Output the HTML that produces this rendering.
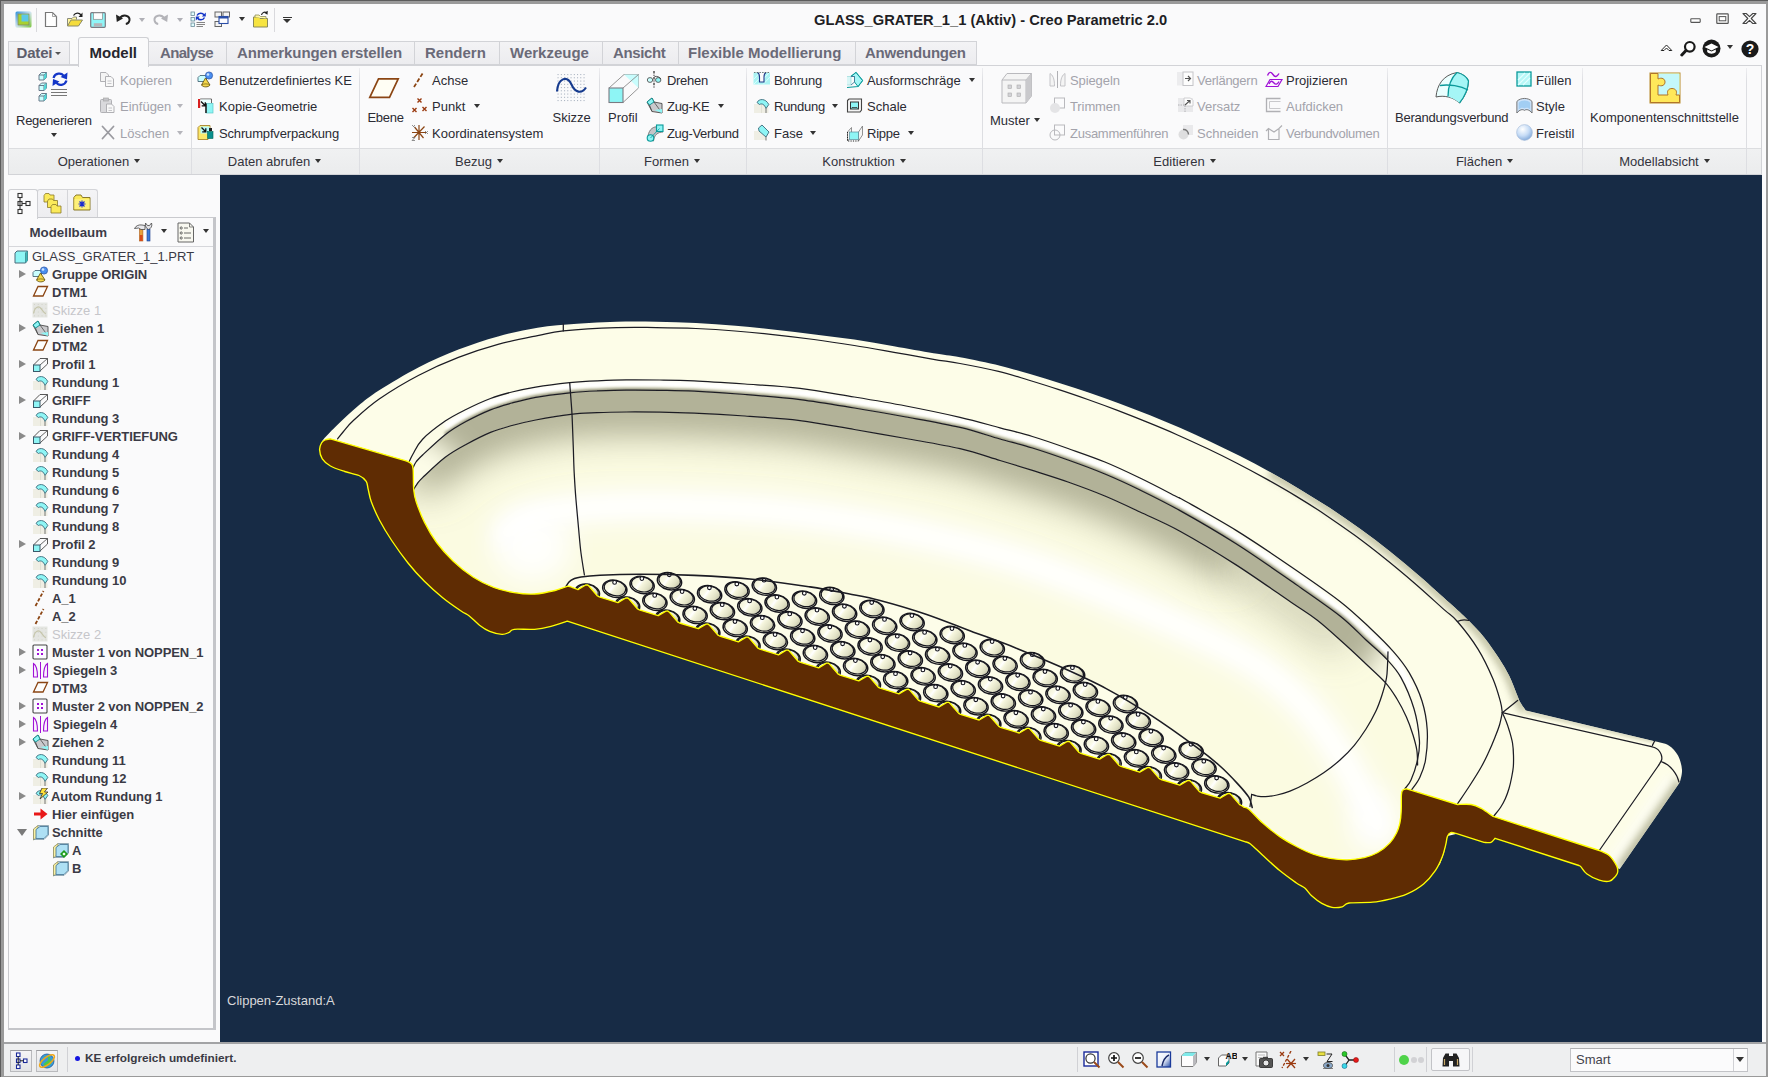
<!DOCTYPE html><html><head><meta charset="utf-8"><title>Creo Parametric 2.0</title><style>
html,body{margin:0;padding:0}
body{width:1768px;height:1077px;overflow:hidden;position:relative;background:#fafafb;font-family:"Liberation Sans", sans-serif;}
.t{position:absolute;white-space:nowrap;}
.ab{position:absolute}
</style></head><body>
<div style="position:absolute;left:0px;top:0px;width:1768px;height:1077px;box-sizing:border-box;border:4px solid #9a9a9a;border-right-width:2px;border-bottom-width:1.5px;"></div>
<div style="position:absolute;left:0px;top:0px;width:1768px;height:1077px;box-sizing:border-box;border-top:1px solid #5c5c5c;border-left:1px solid #5c5c5c;"></div>
<div class="t" style="left:814.0px;top:10.9px;font-size:14.7px;line-height:19px;color:#1e1e24;font-weight:bold;">GLASS_GRATER_1_1 (Aktiv) - Creo Parametric 2.0</div>
<div style="position:absolute;left:36px;top:8px;width:1px;height:24px;background:#d9d9dd"></div>
<div style="position:absolute;left:274px;top:8px;width:1px;height:24px;background:#d9d9dd"></div>
<svg class="ab" style="left:15.0px;top:11.0px" width="17" height="17"><defs><linearGradient id="ga" x1="0" y1="0" x2="1" y2="1"><stop offset="0" stop-color="#2c8fd8"/><stop offset=".5" stop-color="#cfe3ee"/><stop offset="1" stop-color="#7cc63c"/></linearGradient></defs><rect x=".5" y=".5" width="16" height="16" rx="1.5" fill="url(#ga)"/><rect x="3" y="3" width="11" height="11" fill="#a8d12f" stroke="#7a8a6a" stroke-width=".8"/><rect x="6.5" y="3.5" width="7" height="7" fill="#5cc8e8"/></svg>
<svg class="ab" style="left:44.0px;top:11.0px" width="14" height="17"><path d="M1.5 1.5H8.5L12.5 5.5V15.5H1.5Z" fill="#fff" stroke="#777" stroke-width="1.2"/><path d="M8.5 1.5V5.5H12.5" fill="none" stroke="#999" stroke-width=".9"/></svg>
<svg class="ab" style="left:66.0px;top:10.0px" width="18" height="18"><path d="M1.5 16V8.5H6L7.5 7H10.5V9.5" fill="#fff6a0" stroke="#8a8a7a" stroke-width="1"/><path d="M1.5 16L5 10H16.5L12.5 16Z" fill="#f5dc3c" stroke="#8a8a6a" stroke-width="1"/><path d="M7.5 5.5C9.5 2.5 13 2.2 15 5" fill="none" stroke="#222" stroke-width="1.3"/><path d="M16.5 2.5V7H12.5Z" fill="#222"/></svg>
<svg class="ab" style="left:90.0px;top:12.0px" width="16" height="16"><rect x=".7" y=".7" width="14.6" height="14.6" rx="1" fill="#8ff6f8" stroke="#7b7b83" stroke-width="1.2"/><rect x="3.6" y=".9" width="8.8" height="6.4" fill="#fdfdfd" stroke="#8a8a8a" stroke-width=".7"/><rect x="3.8" y="11.2" width="8.4" height="3.4" fill="#b5b5b9"/></svg>
<svg class="ab" style="left:115.0px;top:12.0px" width="17" height="13"><path d="M4.5 6.5C8 1.5 15 3.5 14.5 8.2C14.2 10.5 12.5 11.8 10.8 12" fill="none" stroke="#222" stroke-width="2"/><path d="M1 2.5L8 6.5L1.8 10Z" fill="#222"/></svg>
<svg class="ab" style="left:152.0px;top:12.0px" width="17" height="13"><path d="M12.5 6.5C9 1.5 2 3.5 2.5 8.2C2.8 10.5 4.5 11.8 6.2 12" fill="none" stroke="#b3b3b8" stroke-width="2"/><path d="M16 2.5L9 6.5L15.2 10Z" fill="#b3b3b8"/></svg>
<svg class="ab" style="left:190.0px;top:11.0px" width="17" height="17"><g fill="#dffcfc" stroke="#6a8a9a" stroke-width=".8"><rect x="1" y="1" width="3.5" height="3.5"/><rect x="1" y="6.5" width="3.5" height="3.5"/><rect x="1" y="12" width="3.5" height="3.5"/></g><path d="M7 4.5C8.5 1.5 12.5 1.5 14 4M14.5 6.5C13 9.5 9 9.5 7.5 7" fill="none" stroke="#1436c8" stroke-width="1.5"/><path d="M15.8 1.5V5.5H11.8ZM5.8 9.5V5.5H9.8Z" fill="#1436c8"/><path d="M6.5 11.5H15M6.5 13.5H15M6.5 15.5H13" stroke="#777" stroke-width=".9"/></svg>
<svg class="ab" style="left:214.0px;top:11.0px" width="17" height="17"><g fill="#f4f4f4" stroke="#666" stroke-width="1"><rect x="1" y="1" width="6.5" height="5"/><rect x="9" y="1" width="6.5" height="5"/><rect x="1" y="10.5" width="6.5" height="5"/></g><rect x="5" y="5.5" width="9" height="7" fill="#fdfdff" stroke="#2a4ea8" stroke-width="1.1"/><rect x="5" y="5.5" width="9" height="2" fill="#2a4ea8"/></svg>
<svg class="ab" style="left:252.0px;top:10.0px" width="18" height="18"><path d="M1.5 7H6.5L8 8.5H15.5V17H1.5Z" fill="#f7e441" stroke="#8a8a5a" stroke-width="1"/><path d="M3 7V5H7L8.5 6.5H14V8.5" fill="#fff7a5" stroke="#8a8a5a" stroke-width=".8"/><path d="M9.5 5C10 2.5 12.5 1.5 14.5 2.8" fill="none" stroke="#222" stroke-width="1.2"/><path d="M15.8 .8L15.5 4.8L12.2 2.8Z" fill="#222"/></svg>
<div style="position:absolute;left:139.0px;top:17.5px;width:0;height:0;border-left:3.5px solid transparent;border-right:3.5px solid transparent;border-top:4.0px solid #b0b0b6"></div>
<div style="position:absolute;left:176.5px;top:17.5px;width:0;height:0;border-left:3.5px solid transparent;border-right:3.5px solid transparent;border-top:4.0px solid #b0b0b6"></div>
<div style="position:absolute;left:239.0px;top:17.0px;width:0;height:0;border-left:3.5px solid transparent;border-right:3.5px solid transparent;border-top:4.0px solid #333"></div>
<div style="position:absolute;left:283.0px;top:19.3px;width:0;height:0;border-left:4.2px solid transparent;border-right:4.2px solid transparent;border-top:4.5px solid #333"></div>
<div style="position:absolute;left:283px;top:16.5px;width:8.5px;height:1.5px;background:#333"></div>
<svg class="ab" style="left:1690.0px;top:18.0px" width="11" height="6"><rect x=".8" y=".8" width="9.4" height="3.6" rx=".6" fill="#fff" stroke="#555" stroke-width="1.1"/></svg>
<svg class="ab" style="left:1716.0px;top:13.0px" width="13" height="12"><rect x=".8" y=".8" width="11.4" height="9.6" rx=".6" fill="#fff" stroke="#555" stroke-width="1.2"/><rect x="3.2" y="3.6" width="6.6" height="4.2" fill="none" stroke="#555" stroke-width="1"/></svg>
<svg class="ab" style="left:1742.0px;top:12.0px" width="15" height="13"><path d="M1 1.5H4.2L7.5 4.6L10.8 1.5H14L9.2 6.5L14 11.5H10.8L7.5 8.4L4.2 11.5H1L5.8 6.5Z" fill="#fff" stroke="#444" stroke-width="1.1" stroke-linejoin="round"/></svg>
<svg class="ab" style="left:1660.0px;top:43.0px" width="13" height="9"><path d="M1.2 7.5L6.5 2L11.8 7.5H9L6.5 5L4 7.5Z" fill="#fff" stroke="#222" stroke-width="1"/></svg>
<svg class="ab" style="left:1680.0px;top:40.0px" width="17" height="17"><circle cx="9.8" cy="6.8" r="4.8" fill="#fff" stroke="#1a1a1a" stroke-width="2.2"/><path d="M6 10.5L1.8 15" stroke="#1a1a1a" stroke-width="3" stroke-linecap="round"/></svg>
<svg class="ab" style="left:1702.0px;top:39.0px" width="19" height="19"><circle cx="9.5" cy="9.5" r="9" fill="#1a1a1a"/><path d="M2.5 8L9.5 4.5L16.5 8L9.5 11.5Z" fill="#fff"/><path d="M5.2 10.4V13C7.5 15.2 11.5 15.2 13.8 13V10.4L9.5 12.6Z" fill="#fff"/></svg>
<div style="position:absolute;left:1727.0px;top:45.0px;width:0;height:0;border-left:3.5px solid transparent;border-right:3.5px solid transparent;border-top:4.0px solid #333"></div>
<svg class="ab" style="left:1741.0px;top:40.0px" width="18" height="18"><circle cx="9" cy="9" r="8.6" fill="#1a1a1a"/><text x="9" y="14" text-anchor="middle" font-family="Liberation Sans, sans-serif" font-weight="bold" font-size="14" fill="#fff">?</text></svg>
<div style="position:absolute;left:8px;top:41px;width:969px;height:24px;box-sizing:border-box;background:linear-gradient(#f3f3f5,#ececef);border:1px solid #d2d3d7;"></div>
<div style="position:absolute;left:226px;top:42px;width:1px;height:23px;background:#d2d3d7"></div>
<div style="position:absolute;left:414px;top:42px;width:1px;height:23px;background:#d2d3d7"></div>
<div style="position:absolute;left:499px;top:42px;width:1px;height:23px;background:#d2d3d7"></div>
<div style="position:absolute;left:602px;top:42px;width:1px;height:23px;background:#d2d3d7"></div>
<div style="position:absolute;left:678px;top:42px;width:1px;height:23px;background:#d2d3d7"></div>
<div style="position:absolute;left:855px;top:42px;width:1px;height:23px;background:#d2d3d7"></div>
<div style="position:absolute;left:69px;top:40px;width:9.5px;height:25px;background:#fafafb;border-bottom:1px solid #d2d3d7;box-sizing:border-box"></div>
<div style="position:absolute;left:69px;top:41px;width:1px;height:24px;background:#d2d3d7"></div>
<div style="position:absolute;left:8px;top:65px;width:1754px;height:110px;box-sizing:border-box;border:1px solid #d2d3d7;border-top:1px solid #d2d3d7;background:#fafafb"></div>
<div style="position:absolute;left:78px;top:37px;width:71px;height:29.5px;box-sizing:border-box;background:#fafafb;border:1px solid #cfd0d4;border-bottom:none;border-radius:3px 3px 0 0"></div>
<div class="t" style="left:16.5px;top:42.6px;font-size:15px;line-height:20px;color:#5e5e6c;font-weight:bold;letter-spacing:-0.18px;">Datei</div>
<div style="position:absolute;left:55.0px;top:52.0px;width:0;height:0;border-left:3.0px solid transparent;border-right:3.0px solid transparent;border-top:3.5px solid #555"></div>
<div class="t" style="left:89.5px;top:42.6px;font-size:15px;line-height:20px;color:#26262e;font-weight:bold;">Modell</div>
<div class="t" style="left:160.0px;top:42.6px;font-size:15px;line-height:20px;color:#6a6a78;font-weight:bold;letter-spacing:-0.66px;">Analyse</div>
<div class="t" style="left:237.0px;top:42.6px;font-size:15px;line-height:20px;color:#6a6a78;font-weight:bold;letter-spacing:-0.08px;">Anmerkungen erstellen</div>
<div class="t" style="left:425.0px;top:42.6px;font-size:15px;line-height:20px;color:#6a6a78;font-weight:bold;">Rendern</div>
<div class="t" style="left:510.0px;top:42.6px;font-size:15px;line-height:20px;color:#6a6a78;font-weight:bold;">Werkzeuge</div>
<div class="t" style="left:613.0px;top:42.6px;font-size:15px;line-height:20px;color:#6a6a78;font-weight:bold;letter-spacing:-0.39px;">Ansicht</div>
<div class="t" style="left:688.0px;top:42.6px;font-size:15px;line-height:20px;color:#6a6a78;font-weight:bold;">Flexible Modellierung</div>
<div class="t" style="left:865.0px;top:42.6px;font-size:15px;line-height:20px;color:#6a6a78;font-weight:bold;letter-spacing:-0.23px;">Anwendungen</div>
<div style="position:absolute;left:9px;top:148px;width:1752px;height:26px;background:linear-gradient(#f0f1f2,#ebeced);border-top:1px solid #dcdde0;box-sizing:border-box"></div>
<div style="position:absolute;left:191px;top:68px;width:1px;height:106px;background:linear-gradient(#eeeef1,#dddee2 12%,#dddee2)"></div>
<div style="position:absolute;left:359px;top:68px;width:1px;height:106px;background:linear-gradient(#eeeef1,#dddee2 12%,#dddee2)"></div>
<div style="position:absolute;left:599px;top:68px;width:1px;height:106px;background:linear-gradient(#eeeef1,#dddee2 12%,#dddee2)"></div>
<div style="position:absolute;left:746px;top:68px;width:1px;height:106px;background:linear-gradient(#eeeef1,#dddee2 12%,#dddee2)"></div>
<div style="position:absolute;left:982px;top:68px;width:1px;height:106px;background:linear-gradient(#eeeef1,#dddee2 12%,#dddee2)"></div>
<div style="position:absolute;left:1387px;top:68px;width:1px;height:106px;background:linear-gradient(#eeeef1,#dddee2 12%,#dddee2)"></div>
<div style="position:absolute;left:1582px;top:68px;width:1px;height:106px;background:linear-gradient(#eeeef1,#dddee2 12%,#dddee2)"></div>
<div style="position:absolute;left:1746px;top:68px;width:1px;height:106px;background:linear-gradient(#eeeef1,#dddee2 12%,#dddee2)"></div>
<div class="t" style="left:-1.0px;top:152.6px;width:200px;text-align:center;font-size:13px;line-height:17px;color:#33333c">Operationen<span style="display:inline-block;width:0;height:0;border-left:3.5px solid transparent;border-right:3.5px solid transparent;border-top:4px solid #333;margin-left:5px;vertical-align:3px"></span></div>
<div class="t" style="left:174.5px;top:152.6px;width:200px;text-align:center;font-size:13px;line-height:17px;color:#33333c">Daten abrufen<span style="display:inline-block;width:0;height:0;border-left:3.5px solid transparent;border-right:3.5px solid transparent;border-top:4px solid #333;margin-left:5px;vertical-align:3px"></span></div>
<div class="t" style="left:379.0px;top:152.6px;width:200px;text-align:center;font-size:13px;line-height:17px;color:#33333c">Bezug<span style="display:inline-block;width:0;height:0;border-left:3.5px solid transparent;border-right:3.5px solid transparent;border-top:4px solid #333;margin-left:5px;vertical-align:3px"></span></div>
<div class="t" style="left:572.0px;top:152.6px;width:200px;text-align:center;font-size:13px;line-height:17px;color:#33333c">Formen<span style="display:inline-block;width:0;height:0;border-left:3.5px solid transparent;border-right:3.5px solid transparent;border-top:4px solid #333;margin-left:5px;vertical-align:3px"></span></div>
<div class="t" style="left:764.0px;top:152.6px;width:200px;text-align:center;font-size:13px;line-height:17px;color:#33333c">Konstruktion<span style="display:inline-block;width:0;height:0;border-left:3.5px solid transparent;border-right:3.5px solid transparent;border-top:4px solid #333;margin-left:5px;vertical-align:3px"></span></div>
<div class="t" style="left:1084.5px;top:152.6px;width:200px;text-align:center;font-size:13px;line-height:17px;color:#33333c">Editieren<span style="display:inline-block;width:0;height:0;border-left:3.5px solid transparent;border-right:3.5px solid transparent;border-top:4px solid #333;margin-left:5px;vertical-align:3px"></span></div>
<div class="t" style="left:1384.5px;top:152.6px;width:200px;text-align:center;font-size:13px;line-height:17px;color:#33333c">Flächen<span style="display:inline-block;width:0;height:0;border-left:3.5px solid transparent;border-right:3.5px solid transparent;border-top:4px solid #333;margin-left:5px;vertical-align:3px"></span></div>
<div class="t" style="left:1564.5px;top:152.6px;width:200px;text-align:center;font-size:13px;line-height:17px;color:#33333c">Modellabsicht<span style="display:inline-block;width:0;height:0;border-left:3.5px solid transparent;border-right:3.5px solid transparent;border-top:4px solid #333;margin-left:5px;vertical-align:3px"></span></div>
<svg class="ab" style="left:36.0px;top:70.0px" width="34" height="34"><g transform="translate(3 2.5) scale(1.25)"><path d="M0 2L2 0H6V4L4 6H0Z" fill="#c9ffff" stroke="#6a7a8a" stroke-width=".8"/><path d="M0 2H4V6M4 2L6 0" fill="none" stroke="#6a7a8a" stroke-width=".8"/><path d="M4 2L6 0V4L4 6Z" fill="#52d6d6"/></g><g transform="translate(3 13) scale(1.25)"><path d="M0 2L2 0H6V4L4 6H0Z" fill="#c9ffff" stroke="#6a7a8a" stroke-width=".8"/><path d="M0 2H4V6M4 2L6 0" fill="none" stroke="#6a7a8a" stroke-width=".8"/><path d="M4 2L6 0V4L4 6Z" fill="#52d6d6"/></g><g transform="translate(3 23.5) scale(1.25)"><path d="M0 2L2 0H6V4L4 6H0Z" fill="#c9ffff" stroke="#6a7a8a" stroke-width=".8"/><path d="M0 2H4V6M4 2L6 0" fill="none" stroke="#6a7a8a" stroke-width=".8"/><path d="M4 2L6 0V4L4 6Z" fill="#52d6d6"/></g><path d="M17.5 8C19 3 25.5 2 28 6.5M30.5 10.5C29 15.5 22.5 16.5 20 12" fill="none" stroke="#1436c8" stroke-width="2.2"/><path d="M31.5 2.5L31 9.5L24.5 7Z M16.5 16L17 9L23.5 11.5Z" fill="#1436c8"/><path d="M15 19.5H31M15 22.5H31M15 25.5H31" stroke="#777" stroke-width="1"/></svg>
<div class="t" style="left:16.0px;top:111.7px;font-size:13px;line-height:17px;color:#2b2b33;letter-spacing:-0.25px;">Regenerieren</div>
<div style="position:absolute;left:50.5px;top:133.0px;width:0;height:0;border-left:3.5px solid transparent;border-right:3.5px solid transparent;border-top:4.0px solid #333"></div>
<div class="t" style="left:120.0px;top:71.6px;font-size:13px;line-height:17px;color:#a3a3ab;">Kopieren</div>
<svg class="ab" style="left:99.0px;top:70.6px" width="17" height="17"><path d="M1.5 1.5H7L9.5 4V10.5H1.5Z" fill="#f4f4f4" stroke="#b0b0b4"/><path d="M6.5 5.5H12L14.5 8V15.5H6.5Z" fill="#f8f8f8" stroke="#b0b0b4"/><path d="M8.5 10H12.5M8.5 12.5H12.5" stroke="#c0c0c4" stroke-width=".9"/></svg>
<div class="t" style="left:120.0px;top:98.2px;font-size:13px;line-height:17px;color:#a3a3ab;">Einfügen</div>
<svg class="ab" style="left:99.0px;top:97.2px" width="17" height="17"><rect x="1.5" y="2.5" width="11" height="13" rx="1" fill="#d9d9dc" stroke="#b0b0b4"/><rect x="4.5" y="1" width="5" height="3" fill="#c4c4c8" stroke="#aaa" stroke-width=".7"/><path d="M7.5 7H12.5L15 9.5V15.5H7.5Z" fill="#f8f8f8" stroke="#b0b0b4"/><path d="M9.5 11H13M9.5 13.5H13" stroke="#c0c0c4" stroke-width=".9"/></svg>
<div style="position:absolute;left:177.0px;top:104.2px;width:0;height:0;border-left:3.5px solid transparent;border-right:3.5px solid transparent;border-top:4.0px solid #b5b5bb"></div>
<div class="t" style="left:120.0px;top:124.6px;font-size:13px;line-height:17px;color:#a3a3ab;">Löschen</div>
<svg class="ab" style="left:101.0px;top:123.6px" width="15" height="17"><path d="M1.5 2.5L12.5 14.5M12.5 2.5L1.5 14.5" stroke="#9a9aa0" stroke-width="1.8" stroke-linecap="round"/></svg>
<div style="position:absolute;left:177.0px;top:130.6px;width:0;height:0;border-left:3.5px solid transparent;border-right:3.5px solid transparent;border-top:4.0px solid #b5b5bb"></div>
<div class="t" style="left:219.0px;top:71.6px;font-size:13px;line-height:17px;color:#2b2b33;">Benutzerdefiniertes KE</div>
<svg class="ab" style="left:197.0px;top:70.6px" width="17" height="17"><path d="M1 6.5L3 4.5H9.5V10.5H1Z" fill="#c9ffff" stroke="#4a6a7a" stroke-width=".9"/><circle cx="12" cy="4.5" r="3.6" fill="#4a8ef0" stroke="#2a50a0" stroke-width=".7"/><circle cx="11" cy="3.5" r="1.3" fill="#cfe4ff"/><path d="M8.5 7L4.5 14C6 16.5 11.5 16.5 13 14Z" fill="#f5d84a" stroke="#6a5a1a" stroke-width=".9"/><path d="M4.5 14C6 12.5 11.5 12.5 13 14" fill="none" stroke="#6a5a1a" stroke-width=".7"/></svg>
<div class="t" style="left:219.0px;top:98.2px;font-size:13px;line-height:17px;color:#2b2b33;">Kopie-Geometrie</div>
<svg class="ab" style="left:197.0px;top:97.2px" width="17" height="17"><rect x="1" y="2" width="2.2" height="9" fill="#d82020"/><path d="M3.2 2H14.5V6" fill="none" stroke="#666" stroke-width="1"/><rect x="3.5" y="2.6" width="10" height="4" fill="#e8ffff"/><rect x="9" y="6.5" width="7" height="9.5" fill="#8ef5f5" stroke="#5ac8c8" stroke-width=".7"/><path d="M9 6.5V16" stroke="#222" stroke-width="1.6"/><path d="M4 4.5L8 8.5M8.3 5.2V8.8H4.7" fill="none" stroke="#111" stroke-width="1.3"/></svg>
<div class="t" style="left:219.0px;top:124.6px;font-size:13px;line-height:17px;color:#2b2b33;letter-spacing:-0.16px;">Schrumpfverpackung</div>
<svg class="ab" style="left:197.0px;top:123.6px" width="17" height="17"><path d="M1 3.5L3 1.5H13V13L11 15.5H1Z" fill="#fbe86a" stroke="#a8842a" stroke-width=".9"/><rect x="3.5" y="2.5" width="9" height="7" fill="#b6f9f9"/><path d="M4.5 3.5L8.5 7.5M8.8 4.2V7.8H5.2" fill="none" stroke="#111" stroke-width="1.3"/><rect x="10.5" y="7.5" width="5.5" height="7" fill="#0a8f8f" stroke="#065" stroke-width=".6"/><rect x="12" y="4" width="3" height="3" fill="#222"/></svg>
<svg class="ab" style="left:367.0px;top:76.0px" width="34" height="24"><path d="M2.8 21.3L11.5 2.8H31.2L22.5 21.3Z" fill="#fffef4" stroke="#8b4513" stroke-width="1.7"/></svg>
<div class="t" style="left:367.5px;top:109.2px;font-size:13px;line-height:17px;color:#2b2b33;letter-spacing:-0.3px;">Ebene</div>
<div class="t" style="left:432.0px;top:71.6px;font-size:13px;line-height:17px;color:#2b2b33;">Achse</div>
<svg class="ab" style="left:411.0px;top:70.6px" width="16" height="17"><path d="M3 16L12.5 1" stroke="#8b4513" stroke-width="1.8" stroke-dasharray="4 2"/></svg>
<div class="t" style="left:432.0px;top:98.2px;font-size:13px;line-height:17px;color:#2b2b33;">Punkt</div>
<svg class="ab" style="left:411.0px;top:97.2px" width="17" height="17"><g stroke="#9a3a10" stroke-width="1.4"><path d="M6.5 1.5L10.5 5.5M10.5 1.5L6.5 5.5M1.5 11L5.5 15M5.5 11L1.5 15M11.5 10L15.5 14M15.5 10L11.5 14"/></g></svg>
<div style="position:absolute;left:473.5px;top:104.2px;width:0;height:0;border-left:3.5px solid transparent;border-right:3.5px solid transparent;border-top:4.0px solid #333"></div>
<div class="t" style="left:432.0px;top:124.6px;font-size:13px;line-height:17px;color:#2b2b33;">Koordinatensystem</div>
<svg class="ab" style="left:411.0px;top:123.6px" width="18" height="17"><g stroke="#8b4513" stroke-width="1.2"><path d="M8 1V16M1 8.5H15M2.5 14L13.5 2.5M3.5 3L12.5 14"/></g><g stroke="#777" stroke-width=".8" fill="none"><path d="M1 1L4 4M4 1L2.5 2.5M14 7L17 10M17 7L14 10M1 13.5H4L1 16.5H4"/></g></svg>
<svg class="ab" style="left:555.0px;top:71.0px" width="33" height="33"><rect x="2.5" y="3.0" width="1.1" height="1.1" fill="#aeb7c4"/><rect x="2.5" y="6.2" width="1.1" height="1.1" fill="#aeb7c4"/><rect x="2.5" y="9.5" width="1.1" height="1.1" fill="#aeb7c4"/><rect x="2.5" y="12.8" width="1.1" height="1.1" fill="#aeb7c4"/><rect x="2.5" y="16.0" width="1.1" height="1.1" fill="#aeb7c4"/><rect x="2.5" y="19.2" width="1.1" height="1.1" fill="#aeb7c4"/><rect x="2.5" y="22.5" width="1.1" height="1.1" fill="#aeb7c4"/><rect x="2.5" y="25.8" width="1.1" height="1.1" fill="#aeb7c4"/><rect x="2.5" y="29.0" width="1.1" height="1.1" fill="#aeb7c4"/><rect x="5.8" y="3.0" width="1.1" height="1.1" fill="#aeb7c4"/><rect x="5.8" y="6.2" width="1.1" height="1.1" fill="#aeb7c4"/><rect x="5.8" y="9.5" width="1.1" height="1.1" fill="#aeb7c4"/><rect x="5.8" y="12.8" width="1.1" height="1.1" fill="#aeb7c4"/><rect x="5.8" y="16.0" width="1.1" height="1.1" fill="#aeb7c4"/><rect x="5.8" y="19.2" width="1.1" height="1.1" fill="#aeb7c4"/><rect x="5.8" y="22.5" width="1.1" height="1.1" fill="#aeb7c4"/><rect x="5.8" y="25.8" width="1.1" height="1.1" fill="#aeb7c4"/><rect x="5.8" y="29.0" width="1.1" height="1.1" fill="#aeb7c4"/><rect x="9.0" y="3.0" width="1.1" height="1.1" fill="#aeb7c4"/><rect x="9.0" y="6.2" width="1.1" height="1.1" fill="#aeb7c4"/><rect x="9.0" y="9.5" width="1.1" height="1.1" fill="#aeb7c4"/><rect x="9.0" y="12.8" width="1.1" height="1.1" fill="#aeb7c4"/><rect x="9.0" y="16.0" width="1.1" height="1.1" fill="#aeb7c4"/><rect x="9.0" y="19.2" width="1.1" height="1.1" fill="#aeb7c4"/><rect x="9.0" y="22.5" width="1.1" height="1.1" fill="#aeb7c4"/><rect x="9.0" y="25.8" width="1.1" height="1.1" fill="#aeb7c4"/><rect x="9.0" y="29.0" width="1.1" height="1.1" fill="#aeb7c4"/><rect x="12.2" y="3.0" width="1.1" height="1.1" fill="#aeb7c4"/><rect x="12.2" y="6.2" width="1.1" height="1.1" fill="#aeb7c4"/><rect x="12.2" y="9.5" width="1.1" height="1.1" fill="#aeb7c4"/><rect x="12.2" y="12.8" width="1.1" height="1.1" fill="#aeb7c4"/><rect x="12.2" y="16.0" width="1.1" height="1.1" fill="#aeb7c4"/><rect x="12.2" y="19.2" width="1.1" height="1.1" fill="#aeb7c4"/><rect x="12.2" y="22.5" width="1.1" height="1.1" fill="#aeb7c4"/><rect x="12.2" y="25.8" width="1.1" height="1.1" fill="#aeb7c4"/><rect x="12.2" y="29.0" width="1.1" height="1.1" fill="#aeb7c4"/><rect x="15.5" y="3.0" width="1.1" height="1.1" fill="#aeb7c4"/><rect x="15.5" y="6.2" width="1.1" height="1.1" fill="#aeb7c4"/><rect x="15.5" y="9.5" width="1.1" height="1.1" fill="#aeb7c4"/><rect x="15.5" y="12.8" width="1.1" height="1.1" fill="#aeb7c4"/><rect x="15.5" y="16.0" width="1.1" height="1.1" fill="#aeb7c4"/><rect x="15.5" y="19.2" width="1.1" height="1.1" fill="#aeb7c4"/><rect x="15.5" y="22.5" width="1.1" height="1.1" fill="#aeb7c4"/><rect x="15.5" y="25.8" width="1.1" height="1.1" fill="#aeb7c4"/><rect x="15.5" y="29.0" width="1.1" height="1.1" fill="#aeb7c4"/><rect x="18.8" y="3.0" width="1.1" height="1.1" fill="#aeb7c4"/><rect x="18.8" y="6.2" width="1.1" height="1.1" fill="#aeb7c4"/><rect x="18.8" y="9.5" width="1.1" height="1.1" fill="#aeb7c4"/><rect x="18.8" y="12.8" width="1.1" height="1.1" fill="#aeb7c4"/><rect x="18.8" y="16.0" width="1.1" height="1.1" fill="#aeb7c4"/><rect x="18.8" y="19.2" width="1.1" height="1.1" fill="#aeb7c4"/><rect x="18.8" y="22.5" width="1.1" height="1.1" fill="#aeb7c4"/><rect x="18.8" y="25.8" width="1.1" height="1.1" fill="#aeb7c4"/><rect x="18.8" y="29.0" width="1.1" height="1.1" fill="#aeb7c4"/><rect x="22.0" y="3.0" width="1.1" height="1.1" fill="#aeb7c4"/><rect x="22.0" y="6.2" width="1.1" height="1.1" fill="#aeb7c4"/><rect x="22.0" y="9.5" width="1.1" height="1.1" fill="#aeb7c4"/><rect x="22.0" y="12.8" width="1.1" height="1.1" fill="#aeb7c4"/><rect x="22.0" y="16.0" width="1.1" height="1.1" fill="#aeb7c4"/><rect x="22.0" y="19.2" width="1.1" height="1.1" fill="#aeb7c4"/><rect x="22.0" y="22.5" width="1.1" height="1.1" fill="#aeb7c4"/><rect x="22.0" y="25.8" width="1.1" height="1.1" fill="#aeb7c4"/><rect x="22.0" y="29.0" width="1.1" height="1.1" fill="#aeb7c4"/><rect x="25.2" y="3.0" width="1.1" height="1.1" fill="#aeb7c4"/><rect x="25.2" y="6.2" width="1.1" height="1.1" fill="#aeb7c4"/><rect x="25.2" y="9.5" width="1.1" height="1.1" fill="#aeb7c4"/><rect x="25.2" y="12.8" width="1.1" height="1.1" fill="#aeb7c4"/><rect x="25.2" y="16.0" width="1.1" height="1.1" fill="#aeb7c4"/><rect x="25.2" y="19.2" width="1.1" height="1.1" fill="#aeb7c4"/><rect x="25.2" y="22.5" width="1.1" height="1.1" fill="#aeb7c4"/><rect x="25.2" y="25.8" width="1.1" height="1.1" fill="#aeb7c4"/><rect x="25.2" y="29.0" width="1.1" height="1.1" fill="#aeb7c4"/><rect x="28.5" y="3.0" width="1.1" height="1.1" fill="#aeb7c4"/><rect x="28.5" y="6.2" width="1.1" height="1.1" fill="#aeb7c4"/><rect x="28.5" y="9.5" width="1.1" height="1.1" fill="#aeb7c4"/><rect x="28.5" y="12.8" width="1.1" height="1.1" fill="#aeb7c4"/><rect x="28.5" y="16.0" width="1.1" height="1.1" fill="#aeb7c4"/><rect x="28.5" y="19.2" width="1.1" height="1.1" fill="#aeb7c4"/><rect x="28.5" y="22.5" width="1.1" height="1.1" fill="#aeb7c4"/><rect x="28.5" y="25.8" width="1.1" height="1.1" fill="#aeb7c4"/><rect x="28.5" y="29.0" width="1.1" height="1.1" fill="#aeb7c4"/><path d="M2 20.5C3 7 12 4 16.5 13.5C20 21.5 26.5 23.5 31 16.5" fill="none" stroke="#153a8e" stroke-width="2.1"/></svg>
<div class="t" style="left:552.5px;top:109.2px;font-size:13px;line-height:17px;color:#2b2b33;">Skizze</div>
<svg class="ab" style="left:607.0px;top:72.0px" width="33" height="33"><path d="M2 16L17 2.5H31.5V16L16 30.5" fill="none" stroke="#8a8a8a" stroke-width=".9"/><path d="M17 2.5H31.5V16Z" fill="#c8fdfd"/><path d="M16 16L31.5 2.5" stroke="#8a8a8a" stroke-width=".9"/><rect x="2" y="16" width="14" height="14.5" fill="#8ef5f5" stroke="#7a7a82" stroke-width="1.1"/></svg>
<div class="t" style="left:608.0px;top:109.2px;font-size:13px;line-height:17px;color:#2b2b33;">Profil</div>
<div class="t" style="left:667.0px;top:71.6px;font-size:13px;line-height:17px;color:#2b2b33;letter-spacing:-0.3px;">Drehen</div>
<svg class="ab" style="left:646.0px;top:70.6px" width="17" height="17"><ellipse cx="4" cy="9" rx="2.7" ry="2.4" fill="#c9ffff" stroke="#555" stroke-width=".9"/><ellipse cx="12.2" cy="9" rx="2.7" ry="2.4" fill="#8ef5f5" stroke="#555" stroke-width=".9"/><path d="M8 0V17" stroke="#111" stroke-width="1.1" stroke-dasharray="2.5 1.2 1 1.2"/><path d="M8.5 5.5C11 5 14 6 14.8 8" fill="none" stroke="#444" stroke-width=".9"/></svg>
<div class="t" style="left:667.0px;top:98.2px;font-size:13px;line-height:17px;color:#2b2b33;letter-spacing:-0.3px;">Zug-KE</div>
<svg class="ab" style="left:646.0px;top:97.2px" width="17" height="17"><path d="M1 5L6 1L8 5L16 6.5V16L6 14.5Z" fill="#c9c9cc" stroke="#4a4a4a" stroke-width=".9"/><path d="M1 5L6 1L8 5L3.5 8Z" fill="#8ef5f5" stroke="#0a8a8a" stroke-width=".9"/><path d="M8 5L16 16M3.5 8L6 14.5" stroke="#4a4a4a" stroke-width=".8"/><path d="M8.5 13L16 16V12Z" fill="#8ef5f5"/></svg>
<div style="position:absolute;left:717.5px;top:104.2px;width:0;height:0;border-left:3.5px solid transparent;border-right:3.5px solid transparent;border-top:4.0px solid #333"></div>
<div class="t" style="left:667.0px;top:124.6px;font-size:13px;line-height:17px;color:#2b2b33;letter-spacing:-0.32px;">Zug-Verbund</div>
<svg class="ab" style="left:646.0px;top:123.6px" width="18" height="18"><path d="M2 12C3 5 8 2 12 3L17 8C12 8 8 11 7.5 17Z" fill="#c4c4c8" stroke="#666" stroke-width=".8"/><rect x="10.5" y="1" width="6.5" height="6.5" fill="#8ef5f5" stroke="#0a9a9a" stroke-width="1.1"/><circle cx="4.5" cy="14" r="3.3" fill="#8ef5f5" stroke="#0a9a9a" stroke-width="1.1"/><path d="M4.5 14L13.5 4.5" stroke="#0a9a9a" stroke-width=".8"/></svg>
<div class="t" style="left:774.0px;top:71.6px;font-size:13px;line-height:17px;color:#2b2b33;letter-spacing:-0.15px;">Bohrung</div>
<svg class="ab" style="left:753.0px;top:70.6px" width="18" height="15"><rect x=".5" y="1.5" width="16.5" height="12" fill="#a9f3f3"/><path d="M.5 13.5L12 1.5M5 13.5L16.5 1.5M.5 8.5L7 1.5M10 13.5L17 6" stroke="#d9ffff" stroke-width="1"/><path d="M4.5 1.5C5.5 2 6.5 4 6.5 6V11H11V6C11 4 12 2 13 1.5Z" fill="#fafafb"/><path d="M4.5 1.5C5.5 2 6.5 4 6.5 6V11H11V6C11 4 12 2 13 1.5" fill="none" stroke="#223a8a" stroke-width="1.1"/><path d="M1 1.5H17" stroke="#555" stroke-width=".8" stroke-dasharray="1.5 1.2"/></svg>
<div class="t" style="left:774.0px;top:98.2px;font-size:13px;line-height:17px;color:#2b2b33;letter-spacing:-0.26px;">Rundung</div>
<svg class="ab" style="left:753.0px;top:97.2px" width="17" height="17"><path d="M1 7H8.5L15.5 11V16H1Z" fill="#efeee4"/><path d="M8.5 7V16" stroke="#dcdccf" stroke-width=".8"/><path d="M4 5.5C6 1.5 12.5 1 15.8 7.5L13 11.5C11.5 7.5 9 6 6.5 7.5Z" fill="#8ef5f5" stroke="#3a6a7a" stroke-width=".9"/><path d="M13 11.5V16" stroke="#555" stroke-width=".8"/></svg>
<div style="position:absolute;left:832.0px;top:104.2px;width:0;height:0;border-left:3.5px solid transparent;border-right:3.5px solid transparent;border-top:4.0px solid #333"></div>
<div class="t" style="left:774.0px;top:124.6px;font-size:13px;line-height:17px;color:#2b2b33;">Fase</div>
<svg class="ab" style="left:753.0px;top:123.6px" width="17" height="17"><path d="M1 7H6L13 13V16H1Z" fill="#efeee4"/><path d="M5.5 4L9 1L16 8L13 13L6 7Z" fill="#8ef5f5" stroke="#3a6a7a" stroke-width=".9"/><path d="M13 13V16.5" stroke="#555" stroke-width=".8"/></svg>
<div style="position:absolute;left:810.0px;top:130.6px;width:0;height:0;border-left:3.5px solid transparent;border-right:3.5px solid transparent;border-top:4.0px solid #333"></div>
<div class="t" style="left:867.0px;top:71.6px;font-size:13px;line-height:17px;color:#2b2b33;letter-spacing:-0.08px;">Ausformschräge</div>
<svg class="ab" style="left:846.0px;top:70.6px" width="18" height="18"><path d="M1 5.5H5V14H1" fill="#d8f6f6" stroke="#9ad8d8" stroke-width=".7"/><path d="M5 5.5L10 1.5L16.5 9.5L12 15.5L1 16.5" fill="none" stroke="#0a9a9a" stroke-width="1.2"/><path d="M5 5.5L10 1.5L16.5 9.5L12 15.5L8.5 11V5.5Z" fill="#a5f6f6" stroke="#0a9a9a" stroke-width="1"/><path d="M5 5.5H8.5V11L5 14" fill="none" stroke="#4a7a9a" stroke-width=".9"/></svg>
<div style="position:absolute;left:968.5px;top:77.6px;width:0;height:0;border-left:3.5px solid transparent;border-right:3.5px solid transparent;border-top:4.0px solid #333"></div>
<div class="t" style="left:867.0px;top:98.2px;font-size:13px;line-height:17px;color:#2b2b33;">Schale</div>
<svg class="ab" style="left:846.0px;top:97.2px" width="17" height="17"><path d="M1.5 3.5L3 2H15.5V13L14 15H1.5Z" fill="#f4f4f4" stroke="#444" stroke-width="1.1"/><rect x="4.5" y="5" width="8" height="7" fill="#8ef5f5" stroke="#333" stroke-width="1"/><path d="M4.5 12L6 10.5H11L12.5 12" fill="none" stroke="#333" stroke-width=".8"/></svg>
<div class="t" style="left:867.0px;top:124.6px;font-size:13px;line-height:17px;color:#2b2b33;letter-spacing:-0.25px;">Rippe</div>
<svg class="ab" style="left:846.0px;top:123.6px" width="18" height="18"><path d="M1.5 8L5.5 3.5V12.5L1.5 17Z M12.5 8L16.5 2V11L12.5 17Z" fill="#f4f4f4" stroke="#777" stroke-width=".8"/><rect x="3.5" y="8" width="9" height="7.5" fill="#8ef5f5" stroke="#5a8a9a" stroke-width=".7"/><path d="M1.5 8V17H12.5" fill="none" stroke="#222" stroke-width="1" stroke-dasharray="1.2 1.2"/></svg>
<div style="position:absolute;left:907.5px;top:130.6px;width:0;height:0;border-left:3.5px solid transparent;border-right:3.5px solid transparent;border-top:4.0px solid #333"></div>
<svg class="ab" style="left:1000.0px;top:72.0px" width="33" height="33"><path d="M2 8L7 1.5H31.5V24L26 31H2Z" fill="#f4f4f4" stroke="#b9b9bd" stroke-width="1"/><path d="M26 8H2M26 8V31M26 8L31.5 1.5" stroke="#b9b9bd" stroke-width="1" fill="none"/><path d="M26 8L31.5 1.5V24L26 31Z" fill="#c9c9cc"/><g fill="#d2d2d6" stroke="#aaa" stroke-width=".6"><rect x="8" y="13" width="3.5" height="3.5"/><rect x="17" y="13" width="3.5" height="3.5"/><rect x="8" y="21" width="3.5" height="3.5"/><rect x="17" y="21" width="3.5" height="3.5"/></g></svg>
<div class="t" style="left:990.0px;top:111.7px;font-size:13px;line-height:17px;color:#2b2b33;">Muster</div>
<div style="position:absolute;left:1034.0px;top:117.5px;width:0;height:0;border-left:3.5px solid transparent;border-right:3.5px solid transparent;border-top:4.0px solid #333"></div>
<div class="t" style="left:1070.0px;top:71.6px;font-size:13px;line-height:17px;color:#a3a3ab;letter-spacing:-0.1px;">Spiegeln</div>
<svg class="ab" style="left:1049.0px;top:70.6px" width="17" height="17"><path d="M1 2.5C3.5 4 5.5 7 5.5 15H1ZM16 2.5C13.5 4 11.5 7 11.5 15H16Z" fill="#f4f4f4" stroke="#c4c4c8" stroke-width="1"/><path d="M8.5 0V17" stroke="#b0b0b4" stroke-width="1"/></svg>
<div class="t" style="left:1070.0px;top:98.2px;font-size:13px;line-height:17px;color:#a3a3ab;letter-spacing:-0.1px;">Trimmen</div>
<svg class="ab" style="left:1049.0px;top:97.2px" width="17" height="17"><rect x="5.5" y="1" width="10" height="10" fill="#fbfbfc" stroke="#b9b9bd" stroke-width="1"/><circle cx="6" cy="11" r="5" fill="#e4e4e6"/></svg>
<div class="t" style="left:1070.0px;top:124.6px;font-size:13px;line-height:17px;color:#a3a3ab;letter-spacing:-0.26px;">Zusammenführen</div>
<svg class="ab" style="left:1049.0px;top:123.6px" width="17" height="17"><rect x="5.5" y="1" width="10" height="10" fill="#fbfbfc" stroke="#b9b9bd" stroke-width="1"/><circle cx="6" cy="11" r="5" fill="none" stroke="#b9b9bd" stroke-width="1"/></svg>
<div class="t" style="left:1197.0px;top:71.6px;font-size:13px;line-height:17px;color:#a3a3ab;letter-spacing:-0.25px;">Verlängern</div>
<svg class="ab" style="left:1177.0px;top:70.6px" width="17" height="16"><rect x="0" y="1" width="6" height="13.5" fill="#ececee"/><rect x="6" y="1" width="10" height="13.5" fill="#fdfdfd" stroke="#c4c4c8" stroke-width="1"/><path d="M8 7.5H13.5M11 5L13.5 7.5L11 10" fill="none" stroke="#555" stroke-width="1.2"/></svg>
<div class="t" style="left:1197.0px;top:98.2px;font-size:13px;line-height:17px;color:#a3a3ab;">Versatz</div>
<svg class="ab" style="left:1177.0px;top:97.2px" width="17" height="16"><rect x="1" y="1" width="15" height="14" fill="#e9e9eb"/><path d="M7 1H13.5L16 3.5V9H7Z" fill="#fdfdfd" stroke="#c4c4c8" stroke-width=".8"/><path d="M1 8H8V15" fill="none" stroke="#b0b0b4" stroke-width="1" stroke-dasharray="1.5 1"/><path d="M8 8L13 3.5M10 3.5H13V6.5" fill="none" stroke="#555" stroke-width="1.1"/></svg>
<div class="t" style="left:1197.0px;top:124.6px;font-size:13px;line-height:17px;color:#a3a3ab;">Schneiden</div>
<svg class="ab" style="left:1177.0px;top:123.6px" width="17" height="17"><rect x="6" y="1" width="10" height="10" fill="#e9e9eb"/><circle cx="6.5" cy="10.5" r="5" fill="#dededf"/><path d="M6 5.5C9 5 11.5 7.5 11.5 10.5" fill="none" stroke="#777" stroke-width="1.4"/></svg>
<div class="t" style="left:1286.0px;top:71.6px;font-size:13px;line-height:17px;color:#2b2b33;">Projizieren</div>
<svg class="ab" style="left:1265.0px;top:70.6px" width="18" height="17"><path d="M2.5 4.5C4 .5 6 .5 8 3.5C10 6.5 12 6 14 2.5" fill="none" stroke="#a012d6" stroke-width="1.4"/><path d="M1 15.5L5 8.5H17L13 15.5Z" fill="#fdf4ff" stroke="#a012d6" stroke-width="1.2"/><path d="M4 13C5.5 9.5 7 9.5 9 12C10.5 14 12.5 13.5 14 10.5" fill="none" stroke="#a012d6" stroke-width="1.3"/></svg>
<div class="t" style="left:1286.0px;top:98.2px;font-size:13px;line-height:17px;color:#a3a3ab;">Aufdicken</div>
<svg class="ab" style="left:1265.0px;top:97.2px" width="17" height="16"><path d="M15.5 1.5H1.5V14.5H15.5" fill="none" stroke="#b0b0b4" stroke-width="1.3"/><path d="M15.5 4.5H4.5V11.5H15.5" fill="none" stroke="#c9c9cc" stroke-width="1"/></svg>
<div class="t" style="left:1286.0px;top:124.6px;font-size:13px;line-height:17px;color:#a3a3ab;letter-spacing:-0.3px;">Verbundvolumen</div>
<svg class="ab" style="left:1265.0px;top:123.6px" width="18" height="17"><path d="M1 7L3.5 4.5L9 8L14 4.5L17 1.5M3.5 4.5V15.5H14V4.5" fill="none" stroke="#b0b0b4" stroke-width="1.2"/></svg>
<svg class="ab" style="left:1433.0px;top:71.0px" width="38" height="36"><path d="M3 26C4 14 10 4 24 1.5C30 3 34 6 35.5 10C35 18 33 24 26.5 32C20 26 11 24 3 26Z" fill="#eaffff" stroke="#5a5a5a" stroke-width="1"/><path d="M24 1.5C30 3 34 6 35.5 10C35 18 33 24 26.5 32C22 28 18 26.5 15 25.5C15 15 18 7 24 1.5Z" fill="#a5f6f6"/><path d="M24 1.5C18 7 15 15 15 25.5M7 14.5C16 13 28 15 35 19" fill="none" stroke="#0a9a9a" stroke-width="1.3"/><path d="M24 1.5C30 3 34 6 35.5 10C35 18 33 24 26.5 32" fill="none" stroke="#0a9a9a" stroke-width="1.2"/></svg>
<div class="t" style="left:1395.0px;top:109.2px;font-size:13px;line-height:17px;color:#2b2b33;letter-spacing:-0.22px;">Berandungsverbund</div>
<div class="t" style="left:1536.0px;top:71.6px;font-size:13px;line-height:17px;color:#2b2b33;">Füllen</div>
<svg class="ab" style="left:1516.0px;top:70.6px" width="16" height="16"><rect x="1" y="1" width="14" height="14" fill="#b6f7f7" stroke="#0a9a9a" stroke-width="1.3"/><path d="M2 9L9 2M2 14L14 2M7 14L14 7" stroke="#e4ffff" stroke-width="1.2"/></svg>
<div class="t" style="left:1536.0px;top:98.2px;font-size:13px;line-height:17px;color:#2b2b33;">Style</div>
<svg class="ab" style="left:1516.0px;top:97.2px" width="17" height="17"><g transform="scale(.89)"><path d="M1 5C5 .5 14 .5 18 5V18C15 14 11.5 13.5 9.5 15C7.5 13.5 4 14 1 18Z" fill="#cfe4fa" stroke="#666" stroke-width="1"/><path d="M3 6.5C6 3 13 3 16 6.5V14C13.5 11.5 11 11.5 9.5 13C8 11.5 5.5 11.5 3 14Z" fill="#8ec4f0" stroke="none" opacity=".7"/></g></svg>
<div class="t" style="left:1536.0px;top:124.6px;font-size:13px;line-height:17px;color:#2b2b33;">Freistil</div>
<svg class="ab" style="left:1516.0px;top:123.6px" width="17" height="17"><defs><radialGradient id="gfs" cx=".38" cy=".3" r=".75"><stop offset="0" stop-color="#fff"/><stop offset=".55" stop-color="#c6dcf6"/><stop offset="1" stop-color="#7ea6d8"/></radialGradient></defs><circle cx="8.5" cy="8.5" r="7.9" fill="url(#gfs)" stroke="#a8bcd8" stroke-width=".6"/></svg>
<svg class="ab" style="left:1649.0px;top:72.0px" width="32" height="32"><rect x="1" y="1" width="30" height="30" fill="#ffe85a" stroke="#b88a2a" stroke-width="1"/><path d="M9 1.5H30.5V23H9Z" fill="#c4f8fa"/><path d="M9 1.5V7C13 5 16 7 16 10C16 13 13 15 9 13V23H19C17.5 19 19.5 16.5 23 16.5C26.5 16.5 28.5 19 27 23H30.5V30.5H1.5V1.5Z" fill="#ffe85a" stroke="#b0752a" stroke-width="1"/></svg>
<div class="t" style="left:1590.0px;top:109.2px;font-size:13px;line-height:17px;color:#2b2b33;">Komponentenschnittstelle</div>
<div style="position:absolute;left:37px;top:188.5px;width:61px;height:29px;box-sizing:border-box;background:linear-gradient(#f4f4f6,#ededf0);border:1px solid #d4d5d9;border-bottom:none;border-radius:3px 3px 0 0"></div>
<div style="position:absolute;left:67px;top:189px;width:1px;height:28px;background:#d4d5d9"></div>
<div style="position:absolute;left:8px;top:217px;width:208px;height:813px;box-sizing:border-box;background:#fafafb;border:1px solid #c9cace;border-right:3px solid #c4c5c9;border-bottom:2px solid #c4c5c9"></div>
<div style="position:absolute;left:8px;top:188.5px;width:30px;height:30px;box-sizing:border-box;background:#fafafb;border:1px solid #cfd0d4;border-bottom:none;border-radius:3px 3px 0 0"></div>
<div style="position:absolute;left:9px;top:246px;width:204px;height:1px;background:#d6d7db"></div>
<svg class="ab" style="left:15.0px;top:192.0px" width="17" height="24"><g fill="#fff" stroke="#333" stroke-width="1.1"><rect x="3" y="1.5" width="4" height="4"/><rect x="3" y="9.5" width="4" height="4"/><rect x="3" y="17.5" width="4" height="4"/><rect x="11" y="9.5" width="4" height="4"/></g><path d="M5 5.5V17.5M7 11.5H11" stroke="#333" stroke-width="1.1"/></svg>
<svg class="ab" style="left:43.0px;top:192.0px" width="20" height="22"><g transform="translate(1 1)"><path d="M0 2.5L1.5 .5H5L6 2H10V9H0Z" fill="#fbea5a" stroke="#8a7a2a" stroke-width=".8"/></g><g transform="translate(4.5 6.5)"><path d="M0 2.5L1.5 .5H5L6 2H10V9H0Z" fill="#fbea5a" stroke="#8a7a2a" stroke-width=".8"/></g><g transform="translate(8 12)"><path d="M0 2.5L1.5 .5H5L6 2H10V9H0Z" fill="#fbea5a" stroke="#8a7a2a" stroke-width=".8"/></g></svg>
<svg class="ab" style="left:73.0px;top:194.0px" width="18" height="17"><path d="M.8 3.5L3 1H8L9.5 3.5H17V16H.8Z" fill="#fbea5a" stroke="#8a7a2a" stroke-width="1"/><rect x="1.5" y="5" width="15" height="10" fill="#fdf07a"/><g stroke="#1a2ad0" stroke-width="1.1"><path d="M9 6.5V13.5M5.5 10H12.5M6.5 7.5L11.5 12.5M11.5 7.5L6.5 12.5"/></g></svg>
<div class="t" style="left:29.5px;top:223.7px;font-size:13.3px;line-height:17px;color:#3c3c48;font-weight:bold;">Modellbaum</div>
<svg class="ab" style="left:133.0px;top:221.0px" width="22" height="22"><rect x="6.5" y="8" width="3.4" height="12" fill="#e8a23a" stroke="#a85a1a" stroke-width=".6"/><rect x="6.8" y="14" width="2.8" height="6" fill="#d84a1a"/><path d="M1.5 7.5C3 4.5 6 3.5 9 4L12 4.5V8.5H8L5.5 7Z" fill="#e8e8ec" stroke="#444" stroke-width=".8"/><rect x="14" y="8" width="3" height="12" fill="#3a7ad8" stroke="#1a3a8a" stroke-width=".6"/><path d="M12.5 2C12 5 13 7.5 15.5 8.5C18 7.5 19.5 5 18.5 2L16.5 4.5H14.5Z" fill="#e0e0e4" stroke="#444" stroke-width=".8"/></svg>
<div style="position:absolute;left:160.5px;top:229.0px;width:0;height:0;border-left:3.5px solid transparent;border-right:3.5px solid transparent;border-top:4.0px solid #333"></div>
<svg class="ab" style="left:177.0px;top:222.0px" width="18" height="21"><path d="M1 1H12.5L16.5 5V20H1Z" fill="#f8f8f0" stroke="#666" stroke-width="1"/><path d="M12.5 1V5H16.5" fill="none" stroke="#666" stroke-width=".8"/><g fill="none" stroke="#444" stroke-width=".8"><circle cx="4.2" cy="6" r="1.1"/><circle cx="4.2" cy="11" r="1.1"/><circle cx="4.2" cy="16" r="1.1"/><path d="M7 6H11M7 11H14M7 16H14"/></g></svg>
<div style="position:absolute;left:202.5px;top:229.0px;width:0;height:0;border-left:3.5px solid transparent;border-right:3.5px solid transparent;border-top:4.0px solid #333"></div>
<svg class="ab" style="left:13.5px;top:250.2px" width="15" height="14"><path d="M1 3L3 1H13.5V10.5L11.5 13H1Z" fill="#8ef5f5" stroke="#4a6a7a" stroke-width="1"/><path d="M11.5 3V13M11.5 3L13.5 1" stroke="#4a6a7a" stroke-width=".9" fill="none"/><path d="M11.5 3L13.5 1V10.5L11.5 13Z" fill="#3ab8b8"/></svg>
<div class="t" style="left:32.0px;top:247.7px;font-size:13px;line-height:17px;color:#3a3a45;">GLASS_GRATER_1_1.PRT</div>
<svg class="ab" style="left:32.0px;top:265.7px" width="17" height="17"><path d="M1 6.5L3 4.5H9.5V10.5H1Z" fill="#c9ffff" stroke="#4a6a7a" stroke-width=".9"/><circle cx="12" cy="4.5" r="3.6" fill="#4a8ef0" stroke="#2a50a0" stroke-width=".7"/><circle cx="11" cy="3.5" r="1.3" fill="#cfe4ff"/><path d="M8.5 7L4.5 14C6 16.5 11.5 16.5 13 14Z" fill="#f5d84a" stroke="#6a5a1a" stroke-width=".9"/><path d="M4.5 14C6 12.5 11.5 12.5 13 14" fill="none" stroke="#6a5a1a" stroke-width=".7"/></svg>
<div class="t" style="left:52.0px;top:265.7px;font-size:13px;line-height:17px;color:#3a3a45;font-weight:bold;letter-spacing:-0.08px;">Gruppe ORIGIN</div>
<div class="ab" style="left:19px;top:269.7px;width:0;height:0;border-top:4.5px solid transparent;border-bottom:4.5px solid transparent;border-left:7px solid #8a8a8a"></div>
<svg class="ab" style="left:32.0px;top:283.7px" width="17" height="14"><path d="M1.5 12L6 2.5H15.5L11 12Z" fill="#fdfdfc" stroke="#8b4513" stroke-width="1.3"/></svg>
<div class="t" style="left:52.0px;top:283.7px;font-size:13px;line-height:17px;color:#3a3a45;font-weight:bold;letter-spacing:-0.08px;">DTM1</div>
<svg class="ab" style="left:32.0px;top:301.7px" width="16" height="16"><rect x=".5" y=".5" width="15" height="15" fill="#e4e5e1"/><rect x="2.0" y="2.0" width=".9" height=".9" fill="#cfd0c4"/><rect x="2.0" y="5.8" width=".9" height=".9" fill="#cfd0c4"/><rect x="2.0" y="9.6" width=".9" height=".9" fill="#cfd0c4"/><rect x="2.0" y="13.4" width=".9" height=".9" fill="#cfd0c4"/><rect x="5.8" y="2.0" width=".9" height=".9" fill="#cfd0c4"/><rect x="5.8" y="5.8" width=".9" height=".9" fill="#cfd0c4"/><rect x="5.8" y="9.6" width=".9" height=".9" fill="#cfd0c4"/><rect x="5.8" y="13.4" width=".9" height=".9" fill="#cfd0c4"/><rect x="9.6" y="2.0" width=".9" height=".9" fill="#cfd0c4"/><rect x="9.6" y="5.8" width=".9" height=".9" fill="#cfd0c4"/><rect x="9.6" y="9.6" width=".9" height=".9" fill="#cfd0c4"/><rect x="9.6" y="13.4" width=".9" height=".9" fill="#cfd0c4"/><rect x="13.4" y="2.0" width=".9" height=".9" fill="#cfd0c4"/><rect x="13.4" y="5.8" width=".9" height=".9" fill="#cfd0c4"/><rect x="13.4" y="9.6" width=".9" height=".9" fill="#cfd0c4"/><rect x="13.4" y="13.4" width=".9" height=".9" fill="#cfd0c4"/><path d="M1.5 11.5C2.5 5 6.5 3.5 9 6.5C11 9 12.5 11.5 14 12" fill="none" stroke="#c6c6ac" stroke-width="1.2"/></svg>
<div class="t" style="left:52.0px;top:301.7px;font-size:13px;line-height:17px;color:#c6c6ca;">Skizze 1</div>
<svg class="ab" style="left:32.0px;top:319.7px" width="18" height="17"><path d="M1 5L6 1L8 5L16 6.5V16L6 14.5Z" fill="#c9c9cc" stroke="#4a4a4a" stroke-width=".9"/><path d="M1 5L6 1L8 5L3.5 8Z" fill="#8ef5f5" stroke="#0a8a8a" stroke-width=".9"/><path d="M8 5L16 16M3.5 8L6 14.5" stroke="#4a4a4a" stroke-width=".8"/><path d="M8.5 13L16 16V12Z" fill="#8ef5f5"/></svg>
<div class="t" style="left:52.0px;top:319.7px;font-size:13px;line-height:17px;color:#3a3a45;font-weight:bold;letter-spacing:-0.08px;">Ziehen 1</div>
<div class="ab" style="left:19px;top:323.7px;width:0;height:0;border-top:4.5px solid transparent;border-bottom:4.5px solid transparent;border-left:7px solid #8a8a8a"></div>
<svg class="ab" style="left:32.0px;top:337.7px" width="17" height="14"><path d="M1.5 12L6 2.5H15.5L11 12Z" fill="#fdfdfc" stroke="#8b4513" stroke-width="1.3"/></svg>
<div class="t" style="left:52.0px;top:337.7px;font-size:13px;line-height:17px;color:#3a3a45;font-weight:bold;letter-spacing:-0.08px;">DTM2</div>
<svg class="ab" style="left:32.0px;top:355.7px" width="17" height="17"><path d="M1.5 9L8 2.5H15.5V8L8 15" fill="none" stroke="#444" stroke-width=".9"/><path d="M8 9L15.5 2.5" stroke="#444" stroke-width=".8"/><rect x="1.5" y="9" width="6.5" height="6.5" fill="#8ef5f5" stroke="#3a5a6a" stroke-width="1"/></svg>
<div class="t" style="left:52.0px;top:355.7px;font-size:13px;line-height:17px;color:#3a3a45;font-weight:bold;letter-spacing:-0.08px;">Profil 1</div>
<div class="ab" style="left:19px;top:359.7px;width:0;height:0;border-top:4.5px solid transparent;border-bottom:4.5px solid transparent;border-left:7px solid #8a8a8a"></div>
<svg class="ab" style="left:32.0px;top:373.7px" width="17" height="17"><path d="M1 7H8.5L15.5 11V16H1Z" fill="#efeee4"/><path d="M8.5 7V16" stroke="#dcdccf" stroke-width=".8"/><path d="M4 5.5C6 1.5 12.5 1 15.8 7.5L13 11.5C11.5 7.5 9 6 6.5 7.5Z" fill="#8ef5f5" stroke="#3a6a7a" stroke-width=".9"/><path d="M13 11.5V16" stroke="#555" stroke-width=".8"/></svg>
<div class="t" style="left:52.0px;top:373.7px;font-size:13px;line-height:17px;color:#3a3a45;font-weight:bold;letter-spacing:-0.08px;">Rundung 1</div>
<svg class="ab" style="left:32.0px;top:391.7px" width="17" height="17"><path d="M1.5 9L8 2.5H15.5V8L8 15" fill="none" stroke="#444" stroke-width=".9"/><path d="M8 9L15.5 2.5" stroke="#444" stroke-width=".8"/><rect x="1.5" y="9" width="6.5" height="6.5" fill="#8ef5f5" stroke="#3a5a6a" stroke-width="1"/></svg>
<div class="t" style="left:52.0px;top:391.7px;font-size:13px;line-height:17px;color:#3a3a45;font-weight:bold;letter-spacing:-0.08px;">GRIFF</div>
<div class="ab" style="left:19px;top:395.7px;width:0;height:0;border-top:4.5px solid transparent;border-bottom:4.5px solid transparent;border-left:7px solid #8a8a8a"></div>
<svg class="ab" style="left:32.0px;top:409.7px" width="17" height="17"><path d="M1 7H8.5L15.5 11V16H1Z" fill="#efeee4"/><path d="M8.5 7V16" stroke="#dcdccf" stroke-width=".8"/><path d="M4 5.5C6 1.5 12.5 1 15.8 7.5L13 11.5C11.5 7.5 9 6 6.5 7.5Z" fill="#8ef5f5" stroke="#3a6a7a" stroke-width=".9"/><path d="M13 11.5V16" stroke="#555" stroke-width=".8"/></svg>
<div class="t" style="left:52.0px;top:409.7px;font-size:13px;line-height:17px;color:#3a3a45;font-weight:bold;letter-spacing:-0.08px;">Rundung 3</div>
<svg class="ab" style="left:32.0px;top:427.7px" width="17" height="17"><path d="M1.5 9L8 2.5H15.5V8L8 15" fill="none" stroke="#444" stroke-width=".9"/><path d="M8 9L15.5 2.5" stroke="#444" stroke-width=".8"/><rect x="1.5" y="9" width="6.5" height="6.5" fill="#8ef5f5" stroke="#3a5a6a" stroke-width="1"/></svg>
<div class="t" style="left:52.0px;top:427.7px;font-size:13px;line-height:17px;color:#3a3a45;font-weight:bold;letter-spacing:-0.08px;">GRIFF-VERTIEFUNG</div>
<div class="ab" style="left:19px;top:431.7px;width:0;height:0;border-top:4.5px solid transparent;border-bottom:4.5px solid transparent;border-left:7px solid #8a8a8a"></div>
<svg class="ab" style="left:32.0px;top:445.7px" width="17" height="17"><path d="M1 7H8.5L15.5 11V16H1Z" fill="#efeee4"/><path d="M8.5 7V16" stroke="#dcdccf" stroke-width=".8"/><path d="M4 5.5C6 1.5 12.5 1 15.8 7.5L13 11.5C11.5 7.5 9 6 6.5 7.5Z" fill="#8ef5f5" stroke="#3a6a7a" stroke-width=".9"/><path d="M13 11.5V16" stroke="#555" stroke-width=".8"/></svg>
<div class="t" style="left:52.0px;top:445.7px;font-size:13px;line-height:17px;color:#3a3a45;font-weight:bold;letter-spacing:-0.08px;">Rundung 4</div>
<svg class="ab" style="left:32.0px;top:463.7px" width="17" height="17"><path d="M1 7H8.5L15.5 11V16H1Z" fill="#efeee4"/><path d="M8.5 7V16" stroke="#dcdccf" stroke-width=".8"/><path d="M4 5.5C6 1.5 12.5 1 15.8 7.5L13 11.5C11.5 7.5 9 6 6.5 7.5Z" fill="#8ef5f5" stroke="#3a6a7a" stroke-width=".9"/><path d="M13 11.5V16" stroke="#555" stroke-width=".8"/></svg>
<div class="t" style="left:52.0px;top:463.7px;font-size:13px;line-height:17px;color:#3a3a45;font-weight:bold;letter-spacing:-0.08px;">Rundung 5</div>
<svg class="ab" style="left:32.0px;top:481.7px" width="17" height="17"><path d="M1 7H8.5L15.5 11V16H1Z" fill="#efeee4"/><path d="M8.5 7V16" stroke="#dcdccf" stroke-width=".8"/><path d="M4 5.5C6 1.5 12.5 1 15.8 7.5L13 11.5C11.5 7.5 9 6 6.5 7.5Z" fill="#8ef5f5" stroke="#3a6a7a" stroke-width=".9"/><path d="M13 11.5V16" stroke="#555" stroke-width=".8"/></svg>
<div class="t" style="left:52.0px;top:481.7px;font-size:13px;line-height:17px;color:#3a3a45;font-weight:bold;letter-spacing:-0.08px;">Rundung 6</div>
<svg class="ab" style="left:32.0px;top:499.7px" width="17" height="17"><path d="M1 7H8.5L15.5 11V16H1Z" fill="#efeee4"/><path d="M8.5 7V16" stroke="#dcdccf" stroke-width=".8"/><path d="M4 5.5C6 1.5 12.5 1 15.8 7.5L13 11.5C11.5 7.5 9 6 6.5 7.5Z" fill="#8ef5f5" stroke="#3a6a7a" stroke-width=".9"/><path d="M13 11.5V16" stroke="#555" stroke-width=".8"/></svg>
<div class="t" style="left:52.0px;top:499.7px;font-size:13px;line-height:17px;color:#3a3a45;font-weight:bold;letter-spacing:-0.08px;">Rundung 7</div>
<svg class="ab" style="left:32.0px;top:517.7px" width="17" height="17"><path d="M1 7H8.5L15.5 11V16H1Z" fill="#efeee4"/><path d="M8.5 7V16" stroke="#dcdccf" stroke-width=".8"/><path d="M4 5.5C6 1.5 12.5 1 15.8 7.5L13 11.5C11.5 7.5 9 6 6.5 7.5Z" fill="#8ef5f5" stroke="#3a6a7a" stroke-width=".9"/><path d="M13 11.5V16" stroke="#555" stroke-width=".8"/></svg>
<div class="t" style="left:52.0px;top:517.7px;font-size:13px;line-height:17px;color:#3a3a45;font-weight:bold;letter-spacing:-0.08px;">Rundung 8</div>
<svg class="ab" style="left:32.0px;top:535.7px" width="17" height="17"><path d="M1.5 9L8 2.5H15.5V8L8 15" fill="none" stroke="#444" stroke-width=".9"/><path d="M8 9L15.5 2.5" stroke="#444" stroke-width=".8"/><rect x="1.5" y="9" width="6.5" height="6.5" fill="#8ef5f5" stroke="#3a5a6a" stroke-width="1"/></svg>
<div class="t" style="left:52.0px;top:535.7px;font-size:13px;line-height:17px;color:#3a3a45;font-weight:bold;letter-spacing:-0.08px;">Profil 2</div>
<div class="ab" style="left:19px;top:539.7px;width:0;height:0;border-top:4.5px solid transparent;border-bottom:4.5px solid transparent;border-left:7px solid #8a8a8a"></div>
<svg class="ab" style="left:32.0px;top:553.7px" width="17" height="17"><path d="M1 7H8.5L15.5 11V16H1Z" fill="#efeee4"/><path d="M8.5 7V16" stroke="#dcdccf" stroke-width=".8"/><path d="M4 5.5C6 1.5 12.5 1 15.8 7.5L13 11.5C11.5 7.5 9 6 6.5 7.5Z" fill="#8ef5f5" stroke="#3a6a7a" stroke-width=".9"/><path d="M13 11.5V16" stroke="#555" stroke-width=".8"/></svg>
<div class="t" style="left:52.0px;top:553.7px;font-size:13px;line-height:17px;color:#3a3a45;font-weight:bold;letter-spacing:-0.08px;">Rundung 9</div>
<svg class="ab" style="left:32.0px;top:571.7px" width="17" height="17"><path d="M1 7H8.5L15.5 11V16H1Z" fill="#efeee4"/><path d="M8.5 7V16" stroke="#dcdccf" stroke-width=".8"/><path d="M4 5.5C6 1.5 12.5 1 15.8 7.5L13 11.5C11.5 7.5 9 6 6.5 7.5Z" fill="#8ef5f5" stroke="#3a6a7a" stroke-width=".9"/><path d="M13 11.5V16" stroke="#555" stroke-width=".8"/></svg>
<div class="t" style="left:52.0px;top:571.7px;font-size:13px;line-height:17px;color:#3a3a45;font-weight:bold;letter-spacing:-0.08px;">Rundung 10</div>
<svg class="ab" style="left:32.0px;top:589.7px" width="16" height="17"><path d="M3.5 16L11.5 1" stroke="#8b4513" stroke-width="1.8" stroke-dasharray="3.5 1.8"/></svg>
<div class="t" style="left:52.0px;top:589.7px;font-size:13px;line-height:17px;color:#3a3a45;font-weight:bold;letter-spacing:-0.08px;">A_1</div>
<svg class="ab" style="left:32.0px;top:607.7px" width="16" height="17"><path d="M3.5 16L11.5 1" stroke="#8b4513" stroke-width="1.8" stroke-dasharray="3.5 1.8"/></svg>
<div class="t" style="left:52.0px;top:607.7px;font-size:13px;line-height:17px;color:#3a3a45;font-weight:bold;letter-spacing:-0.08px;">A_2</div>
<svg class="ab" style="left:32.0px;top:625.7px" width="16" height="16"><rect x=".5" y=".5" width="15" height="15" fill="#e4e5e1"/><rect x="2.0" y="2.0" width=".9" height=".9" fill="#cfd0c4"/><rect x="2.0" y="5.8" width=".9" height=".9" fill="#cfd0c4"/><rect x="2.0" y="9.6" width=".9" height=".9" fill="#cfd0c4"/><rect x="2.0" y="13.4" width=".9" height=".9" fill="#cfd0c4"/><rect x="5.8" y="2.0" width=".9" height=".9" fill="#cfd0c4"/><rect x="5.8" y="5.8" width=".9" height=".9" fill="#cfd0c4"/><rect x="5.8" y="9.6" width=".9" height=".9" fill="#cfd0c4"/><rect x="5.8" y="13.4" width=".9" height=".9" fill="#cfd0c4"/><rect x="9.6" y="2.0" width=".9" height=".9" fill="#cfd0c4"/><rect x="9.6" y="5.8" width=".9" height=".9" fill="#cfd0c4"/><rect x="9.6" y="9.6" width=".9" height=".9" fill="#cfd0c4"/><rect x="9.6" y="13.4" width=".9" height=".9" fill="#cfd0c4"/><rect x="13.4" y="2.0" width=".9" height=".9" fill="#cfd0c4"/><rect x="13.4" y="5.8" width=".9" height=".9" fill="#cfd0c4"/><rect x="13.4" y="9.6" width=".9" height=".9" fill="#cfd0c4"/><rect x="13.4" y="13.4" width=".9" height=".9" fill="#cfd0c4"/><path d="M1.5 11.5C2.5 5 6.5 3.5 9 6.5C11 9 12.5 11.5 14 12" fill="none" stroke="#c6c6ac" stroke-width="1.2"/></svg>
<div class="t" style="left:52.0px;top:625.7px;font-size:13px;line-height:17px;color:#c6c6ca;">Skizze 2</div>
<svg class="ab" style="left:32.0px;top:643.7px" width="16" height="16"><rect x="1" y="1" width="14" height="14" rx="1" fill="#fbfbff" stroke="#444" stroke-width="1.1"/><g fill="#a012d6"><rect x="5" y="5" width="2" height="2"/><rect x="9" y="5" width="2" height="2"/><rect x="5" y="9" width="2" height="2"/><rect x="9" y="9" width="2" height="2"/></g></svg>
<div class="t" style="left:52.0px;top:643.7px;font-size:13px;line-height:17px;color:#3a3a45;font-weight:bold;letter-spacing:-0.08px;">Muster 1 von NOPPEN_1</div>
<div class="ab" style="left:19px;top:647.7px;width:0;height:0;border-top:4.5px solid transparent;border-bottom:4.5px solid transparent;border-left:7px solid #8a8a8a"></div>
<svg class="ab" style="left:32.0px;top:661.7px" width="17" height="17"><path d="M1.5 1.5C4 3 5.5 7 5.5 15H1.5ZM15.5 1.5C13 3 11.5 7 11.5 15H15.5Z" fill="#fbf4ff" stroke="#a012d6" stroke-width="1.1"/><path d="M8.5 0V17" stroke="#a012d6" stroke-width="1"/></svg>
<div class="t" style="left:53.0px;top:661.7px;font-size:13px;line-height:17px;color:#3a3a45;font-weight:bold;letter-spacing:-0.08px;">Spiegeln 3</div>
<div class="ab" style="left:19px;top:665.7px;width:0;height:0;border-top:4.5px solid transparent;border-bottom:4.5px solid transparent;border-left:7px solid #8a8a8a"></div>
<svg class="ab" style="left:32.0px;top:679.7px" width="17" height="14"><path d="M1.5 12L6 2.5H15.5L11 12Z" fill="#fdfdfc" stroke="#8b4513" stroke-width="1.3"/></svg>
<div class="t" style="left:52.0px;top:679.7px;font-size:13px;line-height:17px;color:#3a3a45;font-weight:bold;letter-spacing:-0.08px;">DTM3</div>
<svg class="ab" style="left:32.0px;top:697.7px" width="16" height="16"><rect x="1" y="1" width="14" height="14" rx="1" fill="#fbfbff" stroke="#444" stroke-width="1.1"/><g fill="#a012d6"><rect x="5" y="5" width="2" height="2"/><rect x="9" y="5" width="2" height="2"/><rect x="5" y="9" width="2" height="2"/><rect x="9" y="9" width="2" height="2"/></g></svg>
<div class="t" style="left:52.0px;top:697.7px;font-size:13px;line-height:17px;color:#3a3a45;font-weight:bold;letter-spacing:-0.08px;">Muster 2 von NOPPEN_2</div>
<div class="ab" style="left:19px;top:701.7px;width:0;height:0;border-top:4.5px solid transparent;border-bottom:4.5px solid transparent;border-left:7px solid #8a8a8a"></div>
<svg class="ab" style="left:32.0px;top:715.7px" width="17" height="17"><path d="M1.5 1.5C4 3 5.5 7 5.5 15H1.5ZM15.5 1.5C13 3 11.5 7 11.5 15H15.5Z" fill="#fbf4ff" stroke="#a012d6" stroke-width="1.1"/><path d="M8.5 0V17" stroke="#a012d6" stroke-width="1"/></svg>
<div class="t" style="left:53.0px;top:715.7px;font-size:13px;line-height:17px;color:#3a3a45;font-weight:bold;letter-spacing:-0.08px;">Spiegeln 4</div>
<div class="ab" style="left:19px;top:719.7px;width:0;height:0;border-top:4.5px solid transparent;border-bottom:4.5px solid transparent;border-left:7px solid #8a8a8a"></div>
<svg class="ab" style="left:32.0px;top:733.7px" width="18" height="17"><path d="M1 5L6 1L8 5L16 6.5V16L6 14.5Z" fill="#c9c9cc" stroke="#4a4a4a" stroke-width=".9"/><path d="M1 5L6 1L8 5L3.5 8Z" fill="#8ef5f5" stroke="#0a8a8a" stroke-width=".9"/><path d="M8 5L16 16M3.5 8L6 14.5" stroke="#4a4a4a" stroke-width=".8"/><path d="M8.5 13L16 16V12Z" fill="#8ef5f5"/></svg>
<div class="t" style="left:52.0px;top:733.7px;font-size:13px;line-height:17px;color:#3a3a45;font-weight:bold;letter-spacing:-0.08px;">Ziehen 2</div>
<div class="ab" style="left:19px;top:737.7px;width:0;height:0;border-top:4.5px solid transparent;border-bottom:4.5px solid transparent;border-left:7px solid #8a8a8a"></div>
<svg class="ab" style="left:32.0px;top:751.7px" width="17" height="17"><path d="M1 7H8.5L15.5 11V16H1Z" fill="#efeee4"/><path d="M8.5 7V16" stroke="#dcdccf" stroke-width=".8"/><path d="M4 5.5C6 1.5 12.5 1 15.8 7.5L13 11.5C11.5 7.5 9 6 6.5 7.5Z" fill="#8ef5f5" stroke="#3a6a7a" stroke-width=".9"/><path d="M13 11.5V16" stroke="#555" stroke-width=".8"/></svg>
<div class="t" style="left:52.0px;top:751.7px;font-size:13px;line-height:17px;color:#3a3a45;font-weight:bold;letter-spacing:-0.08px;">Rundung 11</div>
<svg class="ab" style="left:32.0px;top:769.7px" width="17" height="17"><path d="M1 7H8.5L15.5 11V16H1Z" fill="#efeee4"/><path d="M8.5 7V16" stroke="#dcdccf" stroke-width=".8"/><path d="M4 5.5C6 1.5 12.5 1 15.8 7.5L13 11.5C11.5 7.5 9 6 6.5 7.5Z" fill="#8ef5f5" stroke="#3a6a7a" stroke-width=".9"/><path d="M13 11.5V16" stroke="#555" stroke-width=".8"/></svg>
<div class="t" style="left:52.0px;top:769.7px;font-size:13px;line-height:17px;color:#3a3a45;font-weight:bold;letter-spacing:-0.08px;">Rundung 12</div>
<svg class="ab" style="left:32.0px;top:787.7px" width="18" height="17"><path d="M1 7H8.5L15.5 11V16H1Z" fill="#efeee4"/><path d="M8.5 7V16" stroke="#dcdccf" stroke-width=".8"/><path d="M4 5.5C6 1.5 12.5 1 15.8 7.5L13 11.5C11.5 7.5 9 6 6.5 7.5Z" fill="#8ef5f5" stroke="#3a6a7a" stroke-width=".9"/><path d="M13 11.5V16" stroke="#555" stroke-width=".8"/><path d="M10 0L15.5 0L12.5 4H16L8 11L10.5 5.5H7.5Z" fill="#ffe13a" stroke="#333" stroke-width=".8"/></svg>
<div class="t" style="left:51.0px;top:787.7px;font-size:13px;line-height:17px;color:#3a3a45;font-weight:bold;letter-spacing:-0.08px;">Autom Rundung 1</div>
<div class="ab" style="left:19px;top:791.7px;width:0;height:0;border-top:4.5px solid transparent;border-bottom:4.5px solid transparent;border-left:7px solid #8a8a8a"></div>
<svg class="ab" style="left:32.0px;top:805.7px" width="17" height="16"><path d="M2 6.5H8.5V2.5L15.5 8L8.5 13.5V9.5H2Z" fill="#e81818"/></svg>
<div class="t" style="left:52.0px;top:805.7px;font-size:13px;line-height:17px;color:#3a3a45;font-weight:bold;letter-spacing:-0.08px;">Hier einfügen</div>
<svg class="ab" style="left:32.0px;top:823.7px" width="18" height="17"><path d="M1.5 5L6 1.5V12L1.5 16Z" fill="#fbf0a0" stroke="#8a8a5a" stroke-width=".8"/><path d="M6 1.5H16.5V11L12 15.5H1.5" fill="none" stroke="#6a8a9a" stroke-width=".7"/><path d="M4 5.5L8 2.5H16V10.5L12 14.5H4Z" fill="#aee0f4" stroke="#4a7a9a" stroke-width=".9"/></svg>
<div class="t" style="left:52.0px;top:823.7px;font-size:13px;line-height:17px;color:#3a3a45;font-weight:bold;letter-spacing:-0.08px;">Schnitte</div>
<div class="ab" style="left:17px;top:828.7px;width:0;height:0;border-left:5px solid transparent;border-right:5px solid transparent;border-top:7px solid #7a7a7a"></div>
<svg class="ab" style="left:52.0px;top:841.7px" width="18" height="17"><path d="M1.5 5L6 1.5V12L1.5 16Z" fill="#fbf0a0" stroke="#8a8a5a" stroke-width=".8"/><path d="M6 1.5H16.5V11L12 15.5H1.5" fill="none" stroke="#6a8a9a" stroke-width=".7"/><path d="M4 5.5L8 2.5H16V10.5L12 14.5H4Z" fill="#aee0f4" stroke="#4a7a9a" stroke-width=".9"/><path d="M12 8L16 12L12 16L8 12Z" fill="#1a9a1a"/><rect x="10.8" y="10.8" width="2.4" height="2.4" fill="#e8ffe8"/></svg>
<div class="t" style="left:72.0px;top:841.7px;font-size:13px;line-height:17px;color:#3a3a45;font-weight:bold;letter-spacing:-0.08px;">A</div>
<svg class="ab" style="left:52.0px;top:859.7px" width="18" height="17"><path d="M1.5 5L6 1.5V12L1.5 16Z" fill="#fbf0a0" stroke="#8a8a5a" stroke-width=".8"/><path d="M6 1.5H16.5V11L12 15.5H1.5" fill="none" stroke="#6a8a9a" stroke-width=".7"/><path d="M4 5.5L8 2.5H16V10.5L12 14.5H4Z" fill="#aee0f4" stroke="#4a7a9a" stroke-width=".9"/></svg>
<div class="t" style="left:72.0px;top:859.7px;font-size:13px;line-height:17px;color:#3a3a45;font-weight:bold;letter-spacing:-0.08px;">B</div>
<svg width="1542" height="867" viewBox="220 175 1542 867" style="position:absolute;left:220px;top:175px;display:block">
<defs>
<filter id="b4" filterUnits="userSpaceOnUse" x="220" y="175" width="1542" height="867"><feGaussianBlur stdDeviation="4"/></filter>
<filter id="b8" filterUnits="userSpaceOnUse" x="220" y="175" width="1542" height="867"><feGaussianBlur stdDeviation="8"/></filter>
<filter id="b14" filterUnits="userSpaceOnUse" x="220" y="175" width="1542" height="867"><feGaussianBlur stdDeviation="14"/></filter>
<filter id="b20" filterUnits="userSpaceOnUse" x="220" y="175" width="1542" height="867"><feGaussianBlur stdDeviation="20"/></filter>
<filter id="b3" filterUnits="userSpaceOnUse" x="220" y="175" width="1542" height="867"><feGaussianBlur stdDeviation="3"/></filter>
<filter id="b2" filterUnits="userSpaceOnUse" x="220" y="175" width="1542" height="867"><feGaussianBlur stdDeviation="1.6"/></filter>
<clipPath id="cbowl"><path d="M413.7 489.4C414.2 488.5 415.5 486.0 417.0 484.0C418.5 482.0 417.9 482.1 422.6 477.6C427.3 473.2 438.0 462.8 445.2 457.3C452.4 451.8 458.4 448.6 466.0 444.5C473.6 440.4 482.8 435.6 490.5 432.4C498.2 429.2 504.5 427.6 512.0 425.5C519.5 423.4 525.9 421.9 535.7 420.0C545.5 418.1 560.6 415.5 570.8 414.3C581.0 413.1 587.8 413.1 597.0 412.7C606.2 412.3 615.7 412.1 626.2 412.0C636.7 411.9 648.7 412.0 660.0 412.2C671.3 412.4 679.9 412.6 694.1 413.2C708.3 413.8 727.4 414.8 745.0 416.0C762.6 417.2 781.8 418.4 800.0 420.6C818.2 422.9 836.6 426.5 854.3 429.5C872.0 432.5 888.4 435.3 906.0 438.5C923.6 441.7 944.3 445.0 960.0 448.7C975.7 452.4 987.9 456.9 1000.0 460.5C1012.1 464.1 1021.1 466.8 1032.4 470.4C1043.7 474.0 1055.9 477.7 1068.0 482.0C1080.1 486.3 1092.9 491.0 1104.9 496.0C1116.9 501.0 1127.5 506.1 1140.0 512.0C1152.5 517.9 1164.0 522.4 1180.0 531.2C1196.0 540.0 1217.1 552.7 1235.7 564.6C1254.3 576.5 1277.9 593.3 1291.4 602.5C1305.0 611.7 1308.2 613.2 1317.0 620.0C1325.8 626.8 1335.8 636.2 1344.0 643.5C1352.2 650.8 1359.1 657.5 1366.0 664.0C1372.9 670.5 1380.4 677.0 1385.6 682.8C1390.8 688.6 1393.5 693.3 1397.0 699.0C1400.5 704.7 1403.7 711.0 1406.4 717.0C1409.1 723.0 1411.3 729.5 1413.0 735.0C1414.7 740.5 1416.0 745.0 1416.8 750.0C1417.6 755.0 1417.5 762.5 1417.6 765.0L1417.0 790.0L1401.6 793.9L1400.0 823.0L1390.0 843.0L1364.0 858.0L1330.0 858.5L1296.0 846.5L1262.0 823.0L1248.0 809.0L1229.0 800.0L587.0 591.0C565.2 587.1 560.5 589.2 555.0 590.5C549.5 591.8 541.4 593.6 534.6 594.0C527.8 594.4 521.0 593.7 514.2 592.6C507.4 591.5 500.6 590.0 493.8 587.4C487.0 584.8 480.2 581.6 473.4 577.2C466.6 572.8 459.1 566.7 453.0 560.9C446.9 555.1 441.4 549.0 436.6 542.5C431.8 536.0 427.8 528.9 424.4 522.1C421.0 515.3 418.0 507.1 416.2 501.7C414.4 496.2 414.2 494.8 413.7 489.4C413.2 483.9 413.2 472.4 413.1 469.0Z"/></clipPath>
<clipPath id="cwall"><path d="M412.8 468.3C413.3 467.2 414.4 464.2 416.0 462.0C417.6 459.8 417.7 459.6 422.6 455.0C427.5 450.4 438.0 440.3 445.2 434.7C452.4 429.1 458.4 425.6 466.0 421.5C473.6 417.4 482.8 412.9 490.5 409.8C498.2 406.7 504.5 405.1 512.0 403.0C519.5 400.9 526.1 399.0 535.7 397.3C545.3 395.6 559.5 393.9 569.7 392.8C579.9 391.8 587.6 391.4 597.0 391.0C606.4 390.6 615.7 390.2 626.2 390.1C636.7 390.0 648.7 390.1 660.0 390.3C671.3 390.5 679.9 390.5 694.1 391.2C708.3 391.9 727.4 393.1 745.0 394.5C762.6 395.9 781.8 397.4 800.0 399.6C818.2 401.9 836.6 405.1 854.3 408.0C872.0 410.9 888.4 413.8 906.0 417.0C923.6 420.2 944.3 423.7 960.0 427.4C975.7 431.1 987.9 435.6 1000.0 439.0C1012.1 442.4 1021.1 444.5 1032.4 448.0C1043.7 451.5 1055.9 455.7 1068.0 460.0C1080.1 464.3 1092.9 469.0 1104.9 474.0C1116.9 479.0 1127.5 483.9 1140.0 490.0C1152.5 496.1 1164.0 501.7 1180.0 510.6C1196.0 519.5 1217.1 531.7 1235.7 543.5C1254.3 555.3 1274.0 569.2 1291.4 581.3C1308.8 593.4 1327.6 606.1 1340.0 615.9C1352.4 625.7 1358.2 632.8 1366.0 640.0C1373.8 647.2 1381.1 653.1 1386.9 659.4C1392.7 665.7 1396.5 669.4 1401.0 677.6C1405.5 685.8 1410.9 698.4 1414.0 708.8C1417.1 719.2 1418.8 731.5 1419.4 740.0C1420.0 748.5 1418.9 753.3 1417.5 760.0C1416.1 766.7 1413.1 775.2 1411.0 780.0C1408.9 784.8 1406.0 787.1 1405.0 788.5L1417.6 765.0C1417.5 762.5 1417.6 755.0 1416.8 750.0C1416.0 745.0 1414.7 740.5 1413.0 735.0C1411.3 729.5 1409.1 723.0 1406.4 717.0C1403.7 711.0 1400.5 704.7 1397.0 699.0C1393.5 693.3 1390.8 688.6 1385.6 682.8C1380.4 677.0 1372.9 670.5 1366.0 664.0C1359.1 657.5 1352.2 650.8 1344.0 643.5C1335.8 636.2 1325.8 626.8 1317.0 620.0C1308.2 613.2 1305.0 611.7 1291.4 602.5C1277.9 593.3 1254.3 576.5 1235.7 564.6C1217.1 552.7 1196.0 540.0 1180.0 531.2C1164.0 522.4 1152.5 517.9 1140.0 512.0C1127.5 506.1 1116.9 501.0 1104.9 496.0C1092.9 491.0 1080.1 486.3 1068.0 482.0C1055.9 477.7 1043.7 474.0 1032.4 470.4C1021.1 466.8 1012.1 464.1 1000.0 460.5C987.9 456.9 975.7 452.4 960.0 448.7C944.3 445.0 923.6 441.7 906.0 438.5C888.4 435.3 872.0 432.5 854.3 429.5C836.6 426.5 818.2 422.9 800.0 420.6C781.8 418.4 762.6 417.2 745.0 416.0C727.4 414.8 708.3 413.8 694.1 413.2C679.9 412.6 671.3 412.4 660.0 412.2C648.7 412.0 636.7 411.9 626.2 412.0C615.7 412.1 606.2 412.3 597.0 412.7C587.8 413.1 581.0 413.1 570.8 414.3C560.6 415.5 545.5 418.1 535.7 420.0C525.9 421.9 519.5 423.4 512.0 425.5C504.5 427.6 498.2 429.2 490.5 432.4C482.8 435.6 473.6 440.4 466.0 444.5C458.4 448.6 452.4 451.8 445.2 457.3C438.0 462.8 427.3 473.2 422.6 477.6C417.9 482.1 418.5 482.0 417.0 484.0C415.5 486.0 414.2 488.5 413.7 489.4Z"/></clipPath>
<clipPath id="cedge"><path d="M408.9 462.3C409.6 460.9 410.7 457.9 413.0 454.0C415.3 450.1 417.2 444.7 422.6 439.2C428.0 433.7 438.0 426.1 445.2 421.1C452.4 416.2 458.4 413.3 466.0 409.5C473.6 405.7 482.8 401.4 490.5 398.5C498.2 395.6 504.5 393.9 512.0 392.0C519.5 390.1 526.1 388.7 535.7 387.1C545.3 385.5 559.5 383.7 569.7 382.6C579.9 381.6 587.6 381.2 597.0 380.8C606.4 380.4 615.7 380.0 626.2 379.9C636.7 379.8 648.7 379.9 660.0 380.0C671.3 380.1 679.9 380.1 694.1 380.8C708.3 381.5 727.4 382.8 745.0 384.0C762.6 385.2 781.8 386.1 800.0 388.3C818.2 390.5 836.6 394.1 854.3 397.0C872.0 399.9 888.4 402.6 906.0 406.0C923.6 409.4 944.3 413.7 960.0 417.3C975.7 420.9 987.9 424.6 1000.0 427.8C1012.1 431.0 1021.1 433.1 1032.4 436.5C1043.7 439.9 1055.9 444.2 1068.0 448.5C1080.1 452.8 1092.9 457.1 1104.9 462.0C1116.9 466.9 1127.9 472.2 1140.0 478.0C1152.1 483.8 1170.1 493.3 1177.3 497.0C1184.5 500.7 1173.6 494.5 1183.3 500.0C1193.0 505.5 1217.7 519.0 1235.7 530.1C1253.7 541.2 1274.0 555.0 1291.4 566.9C1308.8 578.8 1326.9 591.2 1340.0 601.4C1353.1 611.6 1361.1 619.6 1370.0 628.0C1378.9 636.4 1386.9 644.2 1393.4 651.6C1399.9 659.0 1404.2 664.2 1409.0 672.4C1413.8 680.6 1419.0 691.5 1422.0 701.0C1425.0 710.5 1426.6 719.7 1427.2 729.5C1427.8 739.3 1426.8 751.9 1425.5 760.0C1424.2 768.1 1421.8 773.0 1419.5 778.0C1417.2 783.0 1412.8 788.0 1411.5 790.0L1405.0 788.5C1406.0 787.1 1408.9 784.8 1411.0 780.0C1413.1 775.2 1416.1 766.7 1417.5 760.0C1418.9 753.3 1420.0 748.5 1419.4 740.0C1418.8 731.5 1417.1 719.2 1414.0 708.8C1410.9 698.4 1405.5 685.8 1401.0 677.6C1396.5 669.4 1392.7 665.7 1386.9 659.4C1381.1 653.1 1373.8 647.2 1366.0 640.0C1358.2 632.8 1352.4 625.7 1340.0 615.9C1327.6 606.1 1308.8 593.4 1291.4 581.3C1274.0 569.2 1254.3 555.3 1235.7 543.5C1217.1 531.7 1196.0 519.5 1180.0 510.6C1164.0 501.7 1152.5 496.1 1140.0 490.0C1127.5 483.9 1116.9 479.0 1104.9 474.0C1092.9 469.0 1080.1 464.3 1068.0 460.0C1055.9 455.7 1043.7 451.5 1032.4 448.0C1021.1 444.5 1012.1 442.4 1000.0 439.0C987.9 435.6 975.7 431.1 960.0 427.4C944.3 423.7 923.6 420.2 906.0 417.0C888.4 413.8 872.0 410.9 854.3 408.0C836.6 405.1 818.2 401.9 800.0 399.6C781.8 397.4 762.6 395.9 745.0 394.5C727.4 393.1 708.3 391.9 694.1 391.2C679.9 390.5 671.3 390.5 660.0 390.3C648.7 390.1 636.7 390.0 626.2 390.1C615.7 390.2 606.4 390.6 597.0 391.0C587.6 391.4 579.9 391.8 569.7 392.8C559.5 393.9 545.3 395.6 535.7 397.3C526.1 399.0 519.5 400.9 512.0 403.0C504.5 405.1 498.2 406.7 490.5 409.8C482.8 412.9 473.6 417.4 466.0 421.5C458.4 425.6 452.4 429.1 445.2 434.7C438.0 440.3 427.5 450.4 422.6 455.0C417.7 459.6 417.6 459.8 416.0 462.0C414.4 464.2 413.3 467.2 412.8 468.3Z"/></clipPath>
<clipPath id="ccream"><path d="M319.6 449.6C319.9 448.4 320.5 444.6 321.5 442.5C322.5 440.4 322.5 440.3 325.5 437.0C328.5 433.7 334.2 427.9 339.6 422.7C345.0 417.5 351.4 411.4 358.0 406.0C364.6 400.6 369.1 396.8 379.2 390.3C389.3 383.9 405.6 374.1 418.8 367.3C432.0 360.5 445.2 354.6 458.4 349.5C471.6 344.4 484.8 340.0 498.0 336.4C511.2 332.8 524.4 329.8 537.6 327.7C550.8 325.6 564.0 324.8 577.2 323.8C590.4 322.8 603.5 322.1 616.7 321.8C629.9 321.5 643.1 321.6 656.3 321.8C669.5 322.0 682.7 322.4 695.9 323.0C709.1 323.6 722.3 324.6 735.5 325.7C748.7 326.8 761.9 328.2 775.1 329.7C788.3 331.1 801.5 332.8 814.7 334.4C827.9 336.0 841.1 337.6 854.3 339.6C867.5 341.6 880.7 344.0 893.9 346.3C907.1 348.6 922.5 351.5 933.5 353.3C944.5 355.1 948.9 355.2 960.0 357.3C971.1 359.4 988.3 362.9 1000.0 365.7C1011.7 368.5 1020.0 371.2 1030.0 374.1C1040.0 377.0 1050.0 380.0 1060.0 383.2C1070.0 386.4 1080.0 389.7 1090.0 393.1C1100.0 396.5 1110.0 400.0 1120.0 403.7C1130.0 407.4 1140.0 411.2 1150.0 415.2C1160.0 419.2 1170.0 423.4 1180.0 427.8C1190.0 432.2 1200.0 436.7 1210.0 441.4C1220.0 446.1 1230.0 451.0 1240.0 456.1C1250.0 461.2 1260.0 466.6 1270.0 472.1C1280.0 477.7 1290.0 483.4 1300.0 489.4C1310.0 495.4 1320.0 501.5 1330.0 508.1C1340.0 514.7 1350.0 521.6 1360.0 528.8C1370.0 536.0 1380.0 543.6 1390.0 551.5C1400.0 559.4 1410.0 567.8 1420.0 576.4C1430.0 585.0 1442.0 596.1 1450.0 603.3C1458.0 610.5 1462.1 614.1 1467.8 619.7C1473.5 625.4 1478.8 630.8 1484.0 637.2C1489.2 643.6 1494.6 651.6 1498.8 658.0C1503.0 664.4 1506.2 669.8 1509.2 675.8C1512.2 681.8 1514.7 689.2 1516.6 693.7C1518.5 698.2 1518.9 699.8 1520.4 702.6C1521.9 705.4 1524.9 709.2 1525.8 710.5L1654.5 741.3C1656.9 742.0 1664.9 743.0 1668.8 745.4C1672.7 747.8 1675.8 751.5 1678.0 755.6C1680.2 759.7 1681.7 765.5 1682.0 769.9C1682.3 774.3 1680.3 780.0 1680.0 782.0L1619.7 869.0L1600.0 860.0L1455.0 825.0L1456.0 834.0L1447.5 836.0L1444.0 853.0L1440.0 864.0L1425.0 880.0L1380.0 880.0L1300.0 860.0L1240.0 820.0L600.0 610.0L500.0 610.0L400.0 540.0L385.0 500.0L340.0 455.0Z"/></clipPath>
<clipPath id="cnop"><path d="M565.8 586.9C566.3 586.1 567.6 583.4 569.0 582.0C570.4 580.6 572.0 579.6 574.0 578.8C576.0 578.0 576.7 577.6 581.0 577.0C585.3 576.4 590.2 575.8 600.0 575.3C609.8 574.8 624.2 574.3 640.0 574.3C655.8 574.3 675.9 574.6 694.6 575.4C713.3 576.2 733.1 577.3 752.3 579.2C771.5 581.1 794.0 584.5 810.0 586.9C826.0 589.3 836.8 591.5 848.5 593.7C860.2 596.0 867.2 597.0 880.0 600.4C892.8 603.8 910.1 608.8 925.2 613.9C940.3 619.0 955.4 625.2 970.5 630.9C985.6 636.6 1000.6 641.9 1015.7 647.9C1030.8 653.9 1045.9 660.3 1061.0 667.1C1076.1 673.9 1091.1 680.5 1106.2 688.6C1121.3 696.7 1136.4 705.9 1151.5 715.7C1166.6 725.5 1185.4 739.1 1196.7 747.4C1208.0 755.7 1212.6 759.5 1219.4 765.5C1226.2 771.5 1232.6 778.3 1237.5 783.6C1242.4 788.9 1246.3 793.2 1248.8 797.2C1251.2 801.2 1251.6 805.7 1252.2 807.4L1244.0 807.3L1229.0 800.0L587.0 591.0L572.0 587.3Z"/></clipPath>
<linearGradient id="gcone" x1="0" y1="0.35" x2="1" y2="0.65"><stop offset="0" stop-color="#f0f0d6"/><stop offset="0.28" stop-color="#fbfbe8"/><stop offset="0.38" stop-color="#ffffff"/><stop offset="0.5" stop-color="#f6f6de"/><stop offset="0.78" stop-color="#e2e2c6"/><stop offset="1" stop-color="#c6c6ab"/></linearGradient>
</defs>
<rect x="220" y="175" width="1542" height="867" fill="#172b45"/>
<path d="M319.6 449.6C319.9 448.4 320.5 444.6 321.5 442.5C322.5 440.4 322.5 440.3 325.5 437.0C328.5 433.7 334.2 427.9 339.6 422.7C345.0 417.5 351.4 411.4 358.0 406.0C364.6 400.6 369.1 396.8 379.2 390.3C389.3 383.9 405.6 374.1 418.8 367.3C432.0 360.5 445.2 354.6 458.4 349.5C471.6 344.4 484.8 340.0 498.0 336.4C511.2 332.8 524.4 329.8 537.6 327.7C550.8 325.6 564.0 324.8 577.2 323.8C590.4 322.8 603.5 322.1 616.7 321.8C629.9 321.5 643.1 321.6 656.3 321.8C669.5 322.0 682.7 322.4 695.9 323.0C709.1 323.6 722.3 324.6 735.5 325.7C748.7 326.8 761.9 328.2 775.1 329.7C788.3 331.1 801.5 332.8 814.7 334.4C827.9 336.0 841.1 337.6 854.3 339.6C867.5 341.6 880.7 344.0 893.9 346.3C907.1 348.6 922.5 351.5 933.5 353.3C944.5 355.1 948.9 355.2 960.0 357.3C971.1 359.4 988.3 362.9 1000.0 365.7C1011.7 368.5 1020.0 371.2 1030.0 374.1C1040.0 377.0 1050.0 380.0 1060.0 383.2C1070.0 386.4 1080.0 389.7 1090.0 393.1C1100.0 396.5 1110.0 400.0 1120.0 403.7C1130.0 407.4 1140.0 411.2 1150.0 415.2C1160.0 419.2 1170.0 423.4 1180.0 427.8C1190.0 432.2 1200.0 436.7 1210.0 441.4C1220.0 446.1 1230.0 451.0 1240.0 456.1C1250.0 461.2 1260.0 466.6 1270.0 472.1C1280.0 477.7 1290.0 483.4 1300.0 489.4C1310.0 495.4 1320.0 501.5 1330.0 508.1C1340.0 514.7 1350.0 521.6 1360.0 528.8C1370.0 536.0 1380.0 543.6 1390.0 551.5C1400.0 559.4 1410.0 567.8 1420.0 576.4C1430.0 585.0 1442.0 596.1 1450.0 603.3C1458.0 610.5 1462.1 614.1 1467.8 619.7C1473.5 625.4 1478.8 630.8 1484.0 637.2C1489.2 643.6 1494.6 651.6 1498.8 658.0C1503.0 664.4 1506.2 669.8 1509.2 675.8C1512.2 681.8 1514.7 689.2 1516.6 693.7C1518.5 698.2 1518.9 699.8 1520.4 702.6C1521.9 705.4 1524.9 709.2 1525.8 710.5L1654.5 741.3C1656.9 742.0 1664.9 743.0 1668.8 745.4C1672.7 747.8 1675.8 751.5 1678.0 755.6C1680.2 759.7 1681.7 765.5 1682.0 769.9C1682.3 774.3 1680.3 780.0 1680.0 782.0L1619.7 869.0L1600.0 860.0L1455.0 825.0L1456.0 834.0L1447.5 836.0L1444.0 853.0L1440.0 864.0L1425.0 880.0L1380.0 880.0L1300.0 860.0L1240.0 820.0L600.0 610.0L500.0 610.0L400.0 540.0L385.0 500.0L340.0 455.0Z" fill="#fdfde8"/>
<g clip-path="url(#ccream)"><path d="M1270.0 472.1C1275.0 475.0 1290.0 483.4 1300.0 489.4C1310.0 495.4 1320.0 501.5 1330.0 508.1C1340.0 514.7 1350.0 521.6 1360.0 528.8C1370.0 536.0 1380.0 543.6 1390.0 551.5C1400.0 559.4 1410.0 567.8 1420.0 576.4C1430.0 585.0 1442.0 596.1 1450.0 603.3C1458.0 610.5 1462.1 614.1 1467.8 619.7C1473.5 625.4 1478.8 630.8 1484.0 637.2C1489.2 643.6 1494.6 651.6 1498.8 658.0C1503.0 664.4 1506.2 669.8 1509.2 675.8C1512.2 681.8 1514.7 689.2 1516.6 693.7C1518.5 698.2 1518.9 699.8 1520.4 702.6C1521.9 705.4 1524.9 709.2 1525.8 710.5" fill="none" stroke="#c2c2a6" stroke-width="11" filter="url(#b3)" opacity="0.9"/>
<path d="M1525.8 711.7L1654.5 741.3" fill="none" stroke="#d2d2b8" stroke-width="4" filter="url(#b2)" opacity="0.8"/>
<path d="M1680 782L1619.7 869" stroke="#b5b59a" stroke-width="10" filter="url(#b4)" fill="none"/>
<path d="M1670 777L1608 866" stroke="#ffffff" stroke-width="6" filter="url(#b4)" fill="none" opacity=".7"/>
</g>
<g clip-path="url(#cwall)"><path d="M412.8 468.3C413.3 467.2 414.4 464.2 416.0 462.0C417.6 459.8 417.7 459.6 422.6 455.0C427.5 450.4 438.0 440.3 445.2 434.7C452.4 429.1 458.4 425.6 466.0 421.5C473.6 417.4 482.8 412.9 490.5 409.8C498.2 406.7 504.5 405.1 512.0 403.0C519.5 400.9 526.1 399.0 535.7 397.3C545.3 395.6 559.5 393.9 569.7 392.8C579.9 391.8 587.6 391.4 597.0 391.0C606.4 390.6 615.7 390.2 626.2 390.1C636.7 390.0 648.7 390.1 660.0 390.3C671.3 390.5 679.9 390.5 694.1 391.2C708.3 391.9 727.4 393.1 745.0 394.5C762.6 395.9 781.8 397.4 800.0 399.6C818.2 401.9 836.6 405.1 854.3 408.0C872.0 410.9 888.4 413.8 906.0 417.0C923.6 420.2 944.3 423.7 960.0 427.4C975.7 431.1 987.9 435.6 1000.0 439.0C1012.1 442.4 1021.1 444.5 1032.4 448.0C1043.7 451.5 1055.9 455.7 1068.0 460.0C1080.1 464.3 1092.9 469.0 1104.9 474.0C1116.9 479.0 1127.5 483.9 1140.0 490.0C1152.5 496.1 1164.0 501.7 1180.0 510.6C1196.0 519.5 1217.1 531.7 1235.7 543.5C1254.3 555.3 1274.0 569.2 1291.4 581.3C1308.8 593.4 1327.6 606.1 1340.0 615.9C1352.4 625.7 1358.2 632.8 1366.0 640.0C1373.8 647.2 1381.1 653.1 1386.9 659.4C1392.7 665.7 1396.5 669.4 1401.0 677.6C1405.5 685.8 1410.9 698.4 1414.0 708.8C1417.1 719.2 1418.8 731.5 1419.4 740.0C1420.0 748.5 1418.9 753.3 1417.5 760.0C1416.1 766.7 1413.1 775.2 1411.0 780.0C1408.9 784.8 1406.0 787.1 1405.0 788.5L1417.6 765.0C1417.5 762.5 1417.6 755.0 1416.8 750.0C1416.0 745.0 1414.7 740.5 1413.0 735.0C1411.3 729.5 1409.1 723.0 1406.4 717.0C1403.7 711.0 1400.5 704.7 1397.0 699.0C1393.5 693.3 1390.8 688.6 1385.6 682.8C1380.4 677.0 1372.9 670.5 1366.0 664.0C1359.1 657.5 1352.2 650.8 1344.0 643.5C1335.8 636.2 1325.8 626.8 1317.0 620.0C1308.2 613.2 1305.0 611.7 1291.4 602.5C1277.9 593.3 1254.3 576.5 1235.7 564.6C1217.1 552.7 1196.0 540.0 1180.0 531.2C1164.0 522.4 1152.5 517.9 1140.0 512.0C1127.5 506.1 1116.9 501.0 1104.9 496.0C1092.9 491.0 1080.1 486.3 1068.0 482.0C1055.9 477.7 1043.7 474.0 1032.4 470.4C1021.1 466.8 1012.1 464.1 1000.0 460.5C987.9 456.9 975.7 452.4 960.0 448.7C944.3 445.0 923.6 441.7 906.0 438.5C888.4 435.3 872.0 432.5 854.3 429.5C836.6 426.5 818.2 422.9 800.0 420.6C781.8 418.4 762.6 417.2 745.0 416.0C727.4 414.8 708.3 413.8 694.1 413.2C679.9 412.6 671.3 412.4 660.0 412.2C648.7 412.0 636.7 411.9 626.2 412.0C615.7 412.1 606.2 412.3 597.0 412.7C587.8 413.1 581.0 413.1 570.8 414.3C560.6 415.5 545.5 418.1 535.7 420.0C525.9 421.9 519.5 423.4 512.0 425.5C504.5 427.6 498.2 429.2 490.5 432.4C482.8 435.6 473.6 440.4 466.0 444.5C458.4 448.6 452.4 451.8 445.2 457.3C438.0 462.8 427.3 473.2 422.6 477.6C417.9 482.1 418.5 482.0 417.0 484.0C415.5 486.0 414.2 488.5 413.7 489.4Z" fill="#b2b298"/>
<ellipse cx="395" cy="490" rx="75" ry="60" fill="#fdfde8" filter="url(#b14)"/>
<ellipse cx="1424" cy="725" rx="72" ry="100" fill="#fdfde8" filter="url(#b14)"/>
</g>
<g clip-path="url(#cedge)"><path d="M408.9 462.3C409.6 460.9 410.7 457.9 413.0 454.0C415.3 450.1 417.2 444.7 422.6 439.2C428.0 433.7 438.0 426.1 445.2 421.1C452.4 416.2 458.4 413.3 466.0 409.5C473.6 405.7 482.8 401.4 490.5 398.5C498.2 395.6 504.5 393.9 512.0 392.0C519.5 390.1 526.1 388.7 535.7 387.1C545.3 385.5 559.5 383.7 569.7 382.6C579.9 381.6 587.6 381.2 597.0 380.8C606.4 380.4 615.7 380.0 626.2 379.9C636.7 379.8 648.7 379.9 660.0 380.0C671.3 380.1 679.9 380.1 694.1 380.8C708.3 381.5 727.4 382.8 745.0 384.0C762.6 385.2 781.8 386.1 800.0 388.3C818.2 390.5 836.6 394.1 854.3 397.0C872.0 399.9 888.4 402.6 906.0 406.0C923.6 409.4 944.3 413.7 960.0 417.3C975.7 420.9 987.9 424.6 1000.0 427.8C1012.1 431.0 1021.1 433.1 1032.4 436.5C1043.7 439.9 1055.9 444.2 1068.0 448.5C1080.1 452.8 1092.9 457.1 1104.9 462.0C1116.9 466.9 1127.9 472.2 1140.0 478.0C1152.1 483.8 1170.1 493.3 1177.3 497.0C1184.5 500.7 1173.6 494.5 1183.3 500.0C1193.0 505.5 1217.7 519.0 1235.7 530.1C1253.7 541.2 1274.0 555.0 1291.4 566.9C1308.8 578.8 1326.9 591.2 1340.0 601.4C1353.1 611.6 1361.1 619.6 1370.0 628.0C1378.9 636.4 1386.9 644.2 1393.4 651.6C1399.9 659.0 1404.2 664.2 1409.0 672.4C1413.8 680.6 1419.0 691.5 1422.0 701.0C1425.0 710.5 1426.6 719.7 1427.2 729.5C1427.8 739.3 1426.8 751.9 1425.5 760.0C1424.2 768.1 1421.8 773.0 1419.5 778.0C1417.2 783.0 1412.8 788.0 1411.5 790.0L1405.0 788.5C1406.0 787.1 1408.9 784.8 1411.0 780.0C1413.1 775.2 1416.1 766.7 1417.5 760.0C1418.9 753.3 1420.0 748.5 1419.4 740.0C1418.8 731.5 1417.1 719.2 1414.0 708.8C1410.9 698.4 1405.5 685.8 1401.0 677.6C1396.5 669.4 1392.7 665.7 1386.9 659.4C1381.1 653.1 1373.8 647.2 1366.0 640.0C1358.2 632.8 1352.4 625.7 1340.0 615.9C1327.6 606.1 1308.8 593.4 1291.4 581.3C1274.0 569.2 1254.3 555.3 1235.7 543.5C1217.1 531.7 1196.0 519.5 1180.0 510.6C1164.0 501.7 1152.5 496.1 1140.0 490.0C1127.5 483.9 1116.9 479.0 1104.9 474.0C1092.9 469.0 1080.1 464.3 1068.0 460.0C1055.9 455.7 1043.7 451.5 1032.4 448.0C1021.1 444.5 1012.1 442.4 1000.0 439.0C987.9 435.6 975.7 431.1 960.0 427.4C944.3 423.7 923.6 420.2 906.0 417.0C888.4 413.8 872.0 410.9 854.3 408.0C836.6 405.1 818.2 401.9 800.0 399.6C781.8 397.4 762.6 395.9 745.0 394.5C727.4 393.1 708.3 391.9 694.1 391.2C679.9 390.5 671.3 390.5 660.0 390.3C648.7 390.1 636.7 390.0 626.2 390.1C615.7 390.2 606.4 390.6 597.0 391.0C587.6 391.4 579.9 391.8 569.7 392.8C559.5 393.9 545.3 395.6 535.7 397.3C526.1 399.0 519.5 400.9 512.0 403.0C504.5 405.1 498.2 406.7 490.5 409.8C482.8 412.9 473.6 417.4 466.0 421.5C458.4 425.6 452.4 429.1 445.2 434.7C438.0 440.3 427.5 450.4 422.6 455.0C417.7 459.6 417.6 459.8 416.0 462.0C414.4 464.2 413.3 467.2 412.8 468.3Z" fill="#fbfbe6"/>
<path d="M445.2 426.7C448.7 424.6 458.4 418.3 466.0 414.3C473.6 410.3 482.8 405.9 490.5 402.9C498.2 399.9 504.5 398.3 512.0 396.3C519.5 394.3 526.1 392.6 535.7 391.0C545.3 389.4 559.5 387.6 569.7 386.5C579.9 385.5 587.6 385.1 597.0 384.7C606.4 384.2 615.7 383.9 626.2 383.8C636.7 383.7 648.7 383.8 660.0 383.9C671.3 384.1 679.9 384.1 694.1 384.8C708.3 385.5 727.4 386.7 745.0 388.1C762.6 389.4 781.8 390.5 800.0 392.8C818.2 395.0 836.6 398.4 854.3 401.3C872.0 404.2 888.4 407.0 906.0 410.3C923.6 413.6 944.3 417.5 960.0 421.2C975.7 424.8 987.9 428.9 1000.0 432.2C1012.1 435.5 1021.1 437.6 1032.4 441.1C1043.7 444.5 1055.9 448.8 1068.0 453.1C1080.1 457.3 1092.9 461.8 1104.9 466.8C1116.9 471.8 1127.7 476.8 1140.0 482.8C1152.3 488.8 1167.1 496.3 1178.7 502.6C1190.2 508.9 1195.3 511.9 1209.5 520.5C1223.7 529.2 1245.9 542.9 1263.6 554.5C1281.3 566.1 1300.8 579.4 1315.7 590.2C1330.6 601.0 1342.5 610.8 1353.0 619.5C1363.5 628.2 1371.1 635.2 1378.5 642.5C1385.8 649.8 1391.7 655.6 1397.2 663.4C1402.7 671.2 1409.1 685.1 1411.5 689.4" fill="none" stroke="#ffffff" stroke-width="6" filter="url(#b2)"/>
<path d="M445.2 434.7C448.7 432.5 458.4 425.6 466.0 421.5C473.6 417.4 482.8 412.9 490.5 409.8C498.2 406.7 504.5 405.1 512.0 403.0C519.5 400.9 526.1 399.0 535.7 397.3C545.3 395.6 559.5 393.9 569.7 392.8C579.9 391.8 587.6 391.4 597.0 391.0C606.4 390.6 615.7 390.2 626.2 390.1C636.7 390.0 648.7 390.1 660.0 390.3C671.3 390.5 679.9 390.5 694.1 391.2C708.3 391.9 727.4 393.1 745.0 394.5C762.6 395.9 781.8 397.4 800.0 399.6C818.2 401.9 836.6 405.1 854.3 408.0C872.0 410.9 888.4 413.8 906.0 417.0C923.6 420.2 944.3 423.7 960.0 427.4C975.7 431.1 987.9 435.6 1000.0 439.0C1012.1 442.4 1021.1 444.5 1032.4 448.0C1043.7 451.5 1055.9 455.7 1068.0 460.0C1080.1 464.3 1092.9 469.0 1104.9 474.0C1116.9 479.0 1127.5 483.9 1140.0 490.0C1152.5 496.1 1164.0 501.7 1180.0 510.6C1196.0 519.5 1217.1 531.7 1235.7 543.5C1254.3 555.3 1274.0 569.2 1291.4 581.3C1308.8 593.4 1327.6 606.1 1340.0 615.9C1352.4 625.7 1358.2 632.8 1366.0 640.0C1373.8 647.2 1383.4 656.2 1386.9 659.4" fill="none" stroke="#8a8a72" stroke-width="4" filter="url(#b2)"/>
</g>
<g clip-path="url(#cbowl)">
<path d="M413.7 489.4C414.2 488.5 415.5 486.0 417.0 484.0C418.5 482.0 417.9 482.1 422.6 477.6C427.3 473.2 438.0 462.8 445.2 457.3C452.4 451.8 458.4 448.6 466.0 444.5C473.6 440.4 482.8 435.6 490.5 432.4C498.2 429.2 504.5 427.6 512.0 425.5C519.5 423.4 525.9 421.9 535.7 420.0C545.5 418.1 560.6 415.5 570.8 414.3C581.0 413.1 587.8 413.1 597.0 412.7C606.2 412.3 615.7 412.1 626.2 412.0C636.7 411.9 648.7 412.0 660.0 412.2C671.3 412.4 679.9 412.6 694.1 413.2C708.3 413.8 727.4 414.8 745.0 416.0C762.6 417.2 781.8 418.4 800.0 420.6C818.2 422.9 836.6 426.5 854.3 429.5C872.0 432.5 888.4 435.3 906.0 438.5C923.6 441.7 944.3 445.0 960.0 448.7C975.7 452.4 987.9 456.9 1000.0 460.5C1012.1 464.1 1021.1 466.8 1032.4 470.4C1043.7 474.0 1055.9 477.7 1068.0 482.0C1080.1 486.3 1092.9 491.0 1104.9 496.0C1116.9 501.0 1127.5 506.1 1140.0 512.0C1152.5 517.9 1164.0 522.4 1180.0 531.2C1196.0 540.0 1217.1 552.7 1235.7 564.6C1254.3 576.5 1277.9 593.3 1291.4 602.5C1305.0 611.7 1308.2 613.2 1317.0 620.0C1325.8 626.8 1335.8 636.2 1344.0 643.5C1352.2 650.8 1359.1 657.5 1366.0 664.0C1372.9 670.5 1380.4 677.0 1385.6 682.8C1390.8 688.6 1393.5 693.3 1397.0 699.0C1400.5 704.7 1403.7 711.0 1406.4 717.0C1409.1 723.0 1411.3 729.5 1413.0 735.0C1414.7 740.5 1416.0 745.0 1416.8 750.0C1417.6 755.0 1417.5 762.5 1417.6 765.0L1417.0 790.0L1401.6 793.9L1400.0 823.0L1390.0 843.0L1364.0 858.0L1330.0 858.5L1296.0 846.5L1262.0 823.0L1248.0 809.0L1229.0 800.0L587.0 591.0C565.2 587.1 560.5 589.2 555.0 590.5C549.5 591.8 541.4 593.6 534.6 594.0C527.8 594.4 521.0 593.7 514.2 592.6C507.4 591.5 500.6 590.0 493.8 587.4C487.0 584.8 480.2 581.6 473.4 577.2C466.6 572.8 459.1 566.7 453.0 560.9C446.9 555.1 441.4 549.0 436.6 542.5C431.8 536.0 427.8 528.9 424.4 522.1C421.0 515.3 418.0 507.1 416.2 501.7C414.4 496.2 414.2 494.8 413.7 489.4C413.2 483.9 413.2 472.4 413.1 469.0Z" fill="#fbfbe1"/>
<path d="M417.0 484.0C417.9 482.9 417.9 482.1 422.6 477.6C427.3 473.2 438.0 462.8 445.2 457.3C452.4 451.8 458.4 448.6 466.0 444.5C473.6 440.4 482.8 435.6 490.5 432.4C498.2 429.2 504.5 427.6 512.0 425.5C519.5 423.4 525.9 421.9 535.7 420.0C545.5 418.1 560.6 415.5 570.8 414.3C581.0 413.1 587.8 413.1 597.0 412.7C606.2 412.3 615.7 412.1 626.2 412.0C636.7 411.9 648.7 412.0 660.0 412.2C671.3 412.4 679.9 412.6 694.1 413.2C708.3 413.8 727.4 414.8 745.0 416.0C762.6 417.2 781.8 418.4 800.0 420.6C818.2 422.9 836.6 426.5 854.3 429.5C872.0 432.5 888.4 435.3 906.0 438.5C923.6 441.7 944.3 445.0 960.0 448.7C975.7 452.4 987.9 456.9 1000.0 460.5C1012.1 464.1 1021.1 466.8 1032.4 470.4C1043.7 474.0 1055.9 477.7 1068.0 482.0C1080.1 486.3 1092.9 491.0 1104.9 496.0C1116.9 501.0 1127.5 506.1 1140.0 512.0C1152.5 517.9 1164.0 522.4 1180.0 531.2C1196.0 540.0 1226.4 559.0 1235.7 564.6" fill="none" stroke="#86866b" stroke-width="30" filter="url(#b20)"/>
<path d="M1235.7 564.6C1245.0 570.9 1277.9 593.3 1291.4 602.5C1305.0 611.7 1308.2 613.2 1317.0 620.0C1325.8 626.8 1339.5 639.6 1344.0 643.5" fill="none" stroke="#86866b" stroke-width="24" filter="url(#b20)" opacity=".55"/>
<ellipse cx="532" cy="546" rx="40" ry="36" fill="#ffffff" filter="url(#b14)" opacity=".9"/>
<ellipse cx="1372" cy="822" rx="22" ry="34" fill="#ffffff" filter="url(#b14)" opacity=".8"/>
<path d="M500.0 540.0C503.7 536.8 512.0 525.8 522.0 521.0C532.0 516.2 542.7 513.5 560.0 511.0C577.3 508.5 602.7 506.7 626.0 506.0C649.3 505.3 674.3 506.0 700.0 507.0C725.7 508.0 753.3 509.3 780.0 512.0C806.7 514.7 833.3 518.5 860.0 523.0C886.7 527.5 913.3 532.7 940.0 539.0C966.7 545.3 993.3 552.3 1020.0 561.0C1046.7 569.7 1073.3 580.2 1100.0 591.0C1126.7 601.8 1154.5 614.0 1180.0 626.0C1205.5 638.0 1233.0 650.5 1253.0 663.0C1273.0 675.5 1286.3 687.2 1300.0 701.0C1313.7 714.8 1325.0 731.2 1335.0 746.0C1345.0 760.8 1352.2 775.2 1360.0 790.0C1367.8 804.8 1378.3 827.5 1382.0 835.0" fill="none" stroke="#ffffff" stroke-width="32" filter="url(#b14)" opacity=".85"/>
<path d="M500.0 540.0C503.7 536.8 512.0 525.8 522.0 521.0C532.0 516.2 542.7 513.5 560.0 511.0C577.3 508.5 602.7 506.7 626.0 506.0C649.3 505.3 674.3 506.0 700.0 507.0C725.7 508.0 753.3 509.3 780.0 512.0C806.7 514.7 833.3 518.5 860.0 523.0C886.7 527.5 913.3 532.7 940.0 539.0C966.7 545.3 993.3 552.3 1020.0 561.0C1046.7 569.7 1073.3 580.2 1100.0 591.0C1126.7 601.8 1154.5 614.0 1180.0 626.0C1205.5 638.0 1233.0 650.5 1253.0 663.0C1273.0 675.5 1286.3 687.2 1300.0 701.0C1313.7 714.8 1325.0 731.2 1335.0 746.0C1345.0 760.8 1352.2 775.2 1360.0 790.0C1367.8 804.8 1378.3 827.5 1382.0 835.0" fill="none" stroke="#ffffff" stroke-width="14" filter="url(#b8)"/>
</g>
<path d="M565.8 586.9C566.3 586.1 567.6 583.4 569.0 582.0C570.4 580.6 572.0 579.6 574.0 578.8C576.0 578.0 576.7 577.6 581.0 577.0C585.3 576.4 590.2 575.8 600.0 575.3C609.8 574.8 624.2 574.3 640.0 574.3C655.8 574.3 675.9 574.6 694.6 575.4C713.3 576.2 733.1 577.3 752.3 579.2C771.5 581.1 794.0 584.5 810.0 586.9C826.0 589.3 836.8 591.5 848.5 593.7C860.2 596.0 867.2 597.0 880.0 600.4C892.8 603.8 910.1 608.8 925.2 613.9C940.3 619.0 955.4 625.2 970.5 630.9C985.6 636.6 1000.6 641.9 1015.7 647.9C1030.8 653.9 1045.9 660.3 1061.0 667.1C1076.1 673.9 1091.1 680.5 1106.2 688.6C1121.3 696.7 1136.4 705.9 1151.5 715.7C1166.6 725.5 1185.4 739.1 1196.7 747.4C1208.0 755.7 1212.6 759.5 1219.4 765.5C1226.2 771.5 1232.6 778.3 1237.5 783.6C1242.4 788.9 1246.3 793.2 1248.8 797.2C1251.2 801.2 1251.6 805.7 1252.2 807.4L1244.0 807.3L1229.0 800.0L587.0 591.0L572.0 587.3Z" fill="#fdfde9"/>
<g stroke="#16161e"><g transform="translate(669.5 581.2)"><g transform="rotate(12)"><ellipse rx="12.3" ry="8.5" fill="#f4f4dc" stroke-width="1.45"/><ellipse cy="-.6" rx="10.9" ry="7.4" fill="url(#gcone)" stroke-width="1.2"/></g><circle cx="-.2" cy="-6.4" r="1.85" fill="#fff" stroke="#101018" stroke-width="1.1"/></g><g transform="translate(642.1 585.0)"><g transform="rotate(12)"><ellipse rx="12.3" ry="8.5" fill="#f4f4dc" stroke-width="1.45"/><ellipse cy="-.6" rx="10.9" ry="7.4" fill="url(#gcone)" stroke-width="1.2"/></g><circle cx="-.2" cy="-6.4" r="1.85" fill="#fff" stroke="#101018" stroke-width="1.1"/></g><g transform="translate(764.3 586.6)"><g transform="rotate(12)"><ellipse rx="12.3" ry="8.5" fill="#f4f4dc" stroke-width="1.45"/><ellipse cy="-.6" rx="10.9" ry="7.4" fill="url(#gcone)" stroke-width="1.2"/></g><circle cx="-.2" cy="-6.4" r="1.85" fill="#fff" stroke="#101018" stroke-width="1.1"/></g><g transform="translate(614.8 588.8)"><g transform="rotate(12)"><ellipse rx="12.3" ry="8.5" fill="#f4f4dc" stroke-width="1.45"/><ellipse cy="-.6" rx="10.9" ry="7.4" fill="url(#gcone)" stroke-width="1.2"/></g><circle cx="-.2" cy="-6.4" r="1.85" fill="#fff" stroke="#101018" stroke-width="1.1"/></g><g transform="translate(737.0 590.4)"><g transform="rotate(12)"><ellipse rx="12.3" ry="8.5" fill="#f4f4dc" stroke-width="1.45"/><ellipse cy="-.6" rx="10.9" ry="7.4" fill="url(#gcone)" stroke-width="1.2"/></g><circle cx="-.2" cy="-6.4" r="1.85" fill="#fff" stroke="#101018" stroke-width="1.1"/></g><g transform="translate(587.4 592.6)"><g transform="rotate(12)"><ellipse rx="12.3" ry="8.5" fill="#f4f4dc" stroke-width="1.45"/><ellipse cy="-.6" rx="10.9" ry="7.4" fill="url(#gcone)" stroke-width="1.2"/></g><circle cx="-.2" cy="-6.4" r="1.85" fill="#fff" stroke="#101018" stroke-width="1.1"/></g><g transform="translate(709.6 594.2)"><g transform="rotate(12)"><ellipse rx="12.3" ry="8.5" fill="#f4f4dc" stroke-width="1.45"/><ellipse cy="-.6" rx="10.9" ry="7.4" fill="url(#gcone)" stroke-width="1.2"/></g><circle cx="-.2" cy="-6.4" r="1.85" fill="#fff" stroke="#101018" stroke-width="1.1"/></g><g transform="translate(831.8 595.9)"><g transform="rotate(12)"><ellipse rx="12.3" ry="8.5" fill="#f4f4dc" stroke-width="1.45"/><ellipse cy="-.6" rx="10.9" ry="7.4" fill="url(#gcone)" stroke-width="1.2"/></g><circle cx="-.2" cy="-6.4" r="1.85" fill="#fff" stroke="#101018" stroke-width="1.1"/></g><g transform="translate(682.3 598.0)"><g transform="rotate(12)"><ellipse rx="12.3" ry="8.5" fill="#f4f4dc" stroke-width="1.45"/><ellipse cy="-.6" rx="10.9" ry="7.4" fill="url(#gcone)" stroke-width="1.2"/></g><circle cx="-.2" cy="-6.4" r="1.85" fill="#fff" stroke="#101018" stroke-width="1.1"/></g><g transform="translate(804.5 599.7)"><g transform="rotate(12)"><ellipse rx="12.3" ry="8.5" fill="#f4f4dc" stroke-width="1.45"/><ellipse cy="-.6" rx="10.9" ry="7.4" fill="url(#gcone)" stroke-width="1.2"/></g><circle cx="-.2" cy="-6.4" r="1.85" fill="#fff" stroke="#101018" stroke-width="1.1"/></g><g transform="translate(654.9 601.8)"><g transform="rotate(12)"><ellipse rx="12.3" ry="8.5" fill="#f4f4dc" stroke-width="1.45"/><ellipse cy="-.6" rx="10.9" ry="7.4" fill="url(#gcone)" stroke-width="1.2"/></g><circle cx="-.2" cy="-6.4" r="1.85" fill="#fff" stroke="#101018" stroke-width="1.1"/></g><g transform="translate(777.1 603.5)"><g transform="rotate(12)"><ellipse rx="12.3" ry="8.5" fill="#f4f4dc" stroke-width="1.45"/><ellipse cy="-.6" rx="10.9" ry="7.4" fill="url(#gcone)" stroke-width="1.2"/></g><circle cx="-.2" cy="-6.4" r="1.85" fill="#fff" stroke="#101018" stroke-width="1.1"/></g><g transform="translate(627.6 605.6)"><g transform="rotate(12)"><ellipse rx="12.3" ry="8.5" fill="#f4f4dc" stroke-width="1.45"/><ellipse cy="-.6" rx="10.9" ry="7.4" fill="url(#gcone)" stroke-width="1.2"/></g><circle cx="-.2" cy="-6.4" r="1.85" fill="#fff" stroke="#101018" stroke-width="1.1"/></g><g transform="translate(749.8 607.3)"><g transform="rotate(12)"><ellipse rx="12.3" ry="8.5" fill="#f4f4dc" stroke-width="1.45"/><ellipse cy="-.6" rx="10.9" ry="7.4" fill="url(#gcone)" stroke-width="1.2"/></g><circle cx="-.2" cy="-6.4" r="1.85" fill="#fff" stroke="#101018" stroke-width="1.1"/></g><g transform="translate(871.9 608.9)"><g transform="rotate(12)"><ellipse rx="12.3" ry="8.5" fill="#f4f4dc" stroke-width="1.45"/><ellipse cy="-.6" rx="10.9" ry="7.4" fill="url(#gcone)" stroke-width="1.2"/></g><circle cx="-.2" cy="-6.4" r="1.85" fill="#fff" stroke="#101018" stroke-width="1.1"/></g><g transform="translate(722.4 611.1)"><g transform="rotate(12)"><ellipse rx="12.3" ry="8.5" fill="#f4f4dc" stroke-width="1.45"/><ellipse cy="-.6" rx="10.9" ry="7.4" fill="url(#gcone)" stroke-width="1.2"/></g><circle cx="-.2" cy="-6.4" r="1.85" fill="#fff" stroke="#101018" stroke-width="1.1"/></g><g transform="translate(844.6 612.7)"><g transform="rotate(12)"><ellipse rx="12.3" ry="8.5" fill="#f4f4dc" stroke-width="1.45"/><ellipse cy="-.6" rx="10.9" ry="7.4" fill="url(#gcone)" stroke-width="1.2"/></g><circle cx="-.2" cy="-6.4" r="1.85" fill="#fff" stroke="#101018" stroke-width="1.1"/></g><g transform="translate(695.1 614.9)"><g transform="rotate(12)"><ellipse rx="12.3" ry="8.5" fill="#f4f4dc" stroke-width="1.45"/><ellipse cy="-.6" rx="10.9" ry="7.4" fill="url(#gcone)" stroke-width="1.2"/></g><circle cx="-.2" cy="-6.4" r="1.85" fill="#fff" stroke="#101018" stroke-width="1.1"/></g><g transform="translate(817.2 616.5)"><g transform="rotate(12)"><ellipse rx="12.3" ry="8.5" fill="#f4f4dc" stroke-width="1.45"/><ellipse cy="-.6" rx="10.9" ry="7.4" fill="url(#gcone)" stroke-width="1.2"/></g><circle cx="-.2" cy="-6.4" r="1.85" fill="#fff" stroke="#101018" stroke-width="1.1"/></g><g transform="translate(667.7 618.7)"><g transform="rotate(12)"><ellipse rx="12.3" ry="8.5" fill="#f4f4dc" stroke-width="1.45"/><ellipse cy="-.6" rx="10.9" ry="7.4" fill="url(#gcone)" stroke-width="1.2"/></g><circle cx="-.2" cy="-6.4" r="1.85" fill="#fff" stroke="#101018" stroke-width="1.1"/></g><g transform="translate(789.9 620.3)"><g transform="rotate(12)"><ellipse rx="12.3" ry="8.5" fill="#f4f4dc" stroke-width="1.45"/><ellipse cy="-.6" rx="10.9" ry="7.4" fill="url(#gcone)" stroke-width="1.2"/></g><circle cx="-.2" cy="-6.4" r="1.85" fill="#fff" stroke="#101018" stroke-width="1.1"/></g><g transform="translate(912.1 622.0)"><g transform="rotate(12)"><ellipse rx="12.3" ry="8.5" fill="#f4f4dc" stroke-width="1.45"/><ellipse cy="-.6" rx="10.9" ry="7.4" fill="url(#gcone)" stroke-width="1.2"/></g><circle cx="-.2" cy="-6.4" r="1.85" fill="#fff" stroke="#101018" stroke-width="1.1"/></g><g transform="translate(762.5 624.1)"><g transform="rotate(12)"><ellipse rx="12.3" ry="8.5" fill="#f4f4dc" stroke-width="1.45"/><ellipse cy="-.6" rx="10.9" ry="7.4" fill="url(#gcone)" stroke-width="1.2"/></g><circle cx="-.2" cy="-6.4" r="1.85" fill="#fff" stroke="#101018" stroke-width="1.1"/></g><g transform="translate(884.7 625.8)"><g transform="rotate(12)"><ellipse rx="12.3" ry="8.5" fill="#f4f4dc" stroke-width="1.45"/><ellipse cy="-.6" rx="10.9" ry="7.4" fill="url(#gcone)" stroke-width="1.2"/></g><circle cx="-.2" cy="-6.4" r="1.85" fill="#fff" stroke="#101018" stroke-width="1.1"/></g><g transform="translate(735.2 627.9)"><g transform="rotate(12)"><ellipse rx="12.3" ry="8.5" fill="#f4f4dc" stroke-width="1.45"/><ellipse cy="-.6" rx="10.9" ry="7.4" fill="url(#gcone)" stroke-width="1.2"/></g><circle cx="-.2" cy="-6.4" r="1.85" fill="#fff" stroke="#101018" stroke-width="1.1"/></g><g transform="translate(857.4 629.6)"><g transform="rotate(12)"><ellipse rx="12.3" ry="8.5" fill="#f4f4dc" stroke-width="1.45"/><ellipse cy="-.6" rx="10.9" ry="7.4" fill="url(#gcone)" stroke-width="1.2"/></g><circle cx="-.2" cy="-6.4" r="1.85" fill="#fff" stroke="#101018" stroke-width="1.1"/></g><g transform="translate(707.8 631.7)"><g transform="rotate(12)"><ellipse rx="12.3" ry="8.5" fill="#f4f4dc" stroke-width="1.45"/><ellipse cy="-.6" rx="10.9" ry="7.4" fill="url(#gcone)" stroke-width="1.2"/></g><circle cx="-.2" cy="-6.4" r="1.85" fill="#fff" stroke="#101018" stroke-width="1.1"/></g><g transform="translate(830.0 633.4)"><g transform="rotate(12)"><ellipse rx="12.3" ry="8.5" fill="#f4f4dc" stroke-width="1.45"/><ellipse cy="-.6" rx="10.9" ry="7.4" fill="url(#gcone)" stroke-width="1.2"/></g><circle cx="-.2" cy="-6.4" r="1.85" fill="#fff" stroke="#101018" stroke-width="1.1"/></g><g transform="translate(952.2 635.0)"><g transform="rotate(12)"><ellipse rx="12.3" ry="8.5" fill="#f4f4dc" stroke-width="1.45"/><ellipse cy="-.6" rx="10.9" ry="7.4" fill="url(#gcone)" stroke-width="1.2"/></g><circle cx="-.2" cy="-6.4" r="1.85" fill="#fff" stroke="#101018" stroke-width="1.1"/></g><g transform="translate(802.7 637.2)"><g transform="rotate(12)"><ellipse rx="12.3" ry="8.5" fill="#f4f4dc" stroke-width="1.45"/><ellipse cy="-.6" rx="10.9" ry="7.4" fill="url(#gcone)" stroke-width="1.2"/></g><circle cx="-.2" cy="-6.4" r="1.85" fill="#fff" stroke="#101018" stroke-width="1.1"/></g><g transform="translate(924.8 638.8)"><g transform="rotate(12)"><ellipse rx="12.3" ry="8.5" fill="#f4f4dc" stroke-width="1.45"/><ellipse cy="-.6" rx="10.9" ry="7.4" fill="url(#gcone)" stroke-width="1.2"/></g><circle cx="-.2" cy="-6.4" r="1.85" fill="#fff" stroke="#101018" stroke-width="1.1"/></g><g transform="translate(775.3 641.0)"><g transform="rotate(12)"><ellipse rx="12.3" ry="8.5" fill="#f4f4dc" stroke-width="1.45"/><ellipse cy="-.6" rx="10.9" ry="7.4" fill="url(#gcone)" stroke-width="1.2"/></g><circle cx="-.2" cy="-6.4" r="1.85" fill="#fff" stroke="#101018" stroke-width="1.1"/></g><g transform="translate(897.5 642.6)"><g transform="rotate(12)"><ellipse rx="12.3" ry="8.5" fill="#f4f4dc" stroke-width="1.45"/><ellipse cy="-.6" rx="10.9" ry="7.4" fill="url(#gcone)" stroke-width="1.2"/></g><circle cx="-.2" cy="-6.4" r="1.85" fill="#fff" stroke="#101018" stroke-width="1.1"/></g><g transform="translate(748.0 644.8)"><g transform="rotate(12)"><ellipse rx="12.3" ry="8.5" fill="#f4f4dc" stroke-width="1.45"/><ellipse cy="-.6" rx="10.9" ry="7.4" fill="url(#gcone)" stroke-width="1.2"/></g><circle cx="-.2" cy="-6.4" r="1.85" fill="#fff" stroke="#101018" stroke-width="1.1"/></g><g transform="translate(870.1 646.4)"><g transform="rotate(12)"><ellipse rx="12.3" ry="8.5" fill="#f4f4dc" stroke-width="1.45"/><ellipse cy="-.6" rx="10.9" ry="7.4" fill="url(#gcone)" stroke-width="1.2"/></g><circle cx="-.2" cy="-6.4" r="1.85" fill="#fff" stroke="#101018" stroke-width="1.1"/></g><g transform="translate(992.3 648.0)"><g transform="rotate(12)"><ellipse rx="12.3" ry="8.5" fill="#f4f4dc" stroke-width="1.45"/><ellipse cy="-.6" rx="10.9" ry="7.4" fill="url(#gcone)" stroke-width="1.2"/></g><circle cx="-.2" cy="-6.4" r="1.85" fill="#fff" stroke="#101018" stroke-width="1.1"/></g><g transform="translate(842.8 650.2)"><g transform="rotate(12)"><ellipse rx="12.3" ry="8.5" fill="#f4f4dc" stroke-width="1.45"/><ellipse cy="-.6" rx="10.9" ry="7.4" fill="url(#gcone)" stroke-width="1.2"/></g><circle cx="-.2" cy="-6.4" r="1.85" fill="#fff" stroke="#101018" stroke-width="1.1"/></g><g transform="translate(965.0 651.8)"><g transform="rotate(12)"><ellipse rx="12.3" ry="8.5" fill="#f4f4dc" stroke-width="1.45"/><ellipse cy="-.6" rx="10.9" ry="7.4" fill="url(#gcone)" stroke-width="1.2"/></g><circle cx="-.2" cy="-6.4" r="1.85" fill="#fff" stroke="#101018" stroke-width="1.1"/></g><g transform="translate(815.4 654.0)"><g transform="rotate(12)"><ellipse rx="12.3" ry="8.5" fill="#f4f4dc" stroke-width="1.45"/><ellipse cy="-.6" rx="10.9" ry="7.4" fill="url(#gcone)" stroke-width="1.2"/></g><circle cx="-.2" cy="-6.4" r="1.85" fill="#fff" stroke="#101018" stroke-width="1.1"/></g><g transform="translate(937.6 655.6)"><g transform="rotate(12)"><ellipse rx="12.3" ry="8.5" fill="#f4f4dc" stroke-width="1.45"/><ellipse cy="-.6" rx="10.9" ry="7.4" fill="url(#gcone)" stroke-width="1.2"/></g><circle cx="-.2" cy="-6.4" r="1.85" fill="#fff" stroke="#101018" stroke-width="1.1"/></g><g transform="translate(788.1 657.8)"><g transform="rotate(12)"><ellipse rx="12.3" ry="8.5" fill="#f4f4dc" stroke-width="1.45"/><ellipse cy="-.6" rx="10.9" ry="7.4" fill="url(#gcone)" stroke-width="1.2"/></g><circle cx="-.2" cy="-6.4" r="1.85" fill="#fff" stroke="#101018" stroke-width="1.1"/></g><g transform="translate(910.3 659.4)"><g transform="rotate(12)"><ellipse rx="12.3" ry="8.5" fill="#f4f4dc" stroke-width="1.45"/><ellipse cy="-.6" rx="10.9" ry="7.4" fill="url(#gcone)" stroke-width="1.2"/></g><circle cx="-.2" cy="-6.4" r="1.85" fill="#fff" stroke="#101018" stroke-width="1.1"/></g><g transform="translate(1032.5 661.1)"><g transform="rotate(12)"><ellipse rx="12.3" ry="8.5" fill="#f4f4dc" stroke-width="1.45"/><ellipse cy="-.6" rx="10.9" ry="7.4" fill="url(#gcone)" stroke-width="1.2"/></g><circle cx="-.2" cy="-6.4" r="1.85" fill="#fff" stroke="#101018" stroke-width="1.1"/></g><g transform="translate(882.9 663.2)"><g transform="rotate(12)"><ellipse rx="12.3" ry="8.5" fill="#f4f4dc" stroke-width="1.45"/><ellipse cy="-.6" rx="10.9" ry="7.4" fill="url(#gcone)" stroke-width="1.2"/></g><circle cx="-.2" cy="-6.4" r="1.85" fill="#fff" stroke="#101018" stroke-width="1.1"/></g><g transform="translate(1005.1 664.9)"><g transform="rotate(12)"><ellipse rx="12.3" ry="8.5" fill="#f4f4dc" stroke-width="1.45"/><ellipse cy="-.6" rx="10.9" ry="7.4" fill="url(#gcone)" stroke-width="1.2"/></g><circle cx="-.2" cy="-6.4" r="1.85" fill="#fff" stroke="#101018" stroke-width="1.1"/></g><g transform="translate(855.6 667.0)"><g transform="rotate(12)"><ellipse rx="12.3" ry="8.5" fill="#f4f4dc" stroke-width="1.45"/><ellipse cy="-.6" rx="10.9" ry="7.4" fill="url(#gcone)" stroke-width="1.2"/></g><circle cx="-.2" cy="-6.4" r="1.85" fill="#fff" stroke="#101018" stroke-width="1.1"/></g><g transform="translate(977.8 668.7)"><g transform="rotate(12)"><ellipse rx="12.3" ry="8.5" fill="#f4f4dc" stroke-width="1.45"/><ellipse cy="-.6" rx="10.9" ry="7.4" fill="url(#gcone)" stroke-width="1.2"/></g><circle cx="-.2" cy="-6.4" r="1.85" fill="#fff" stroke="#101018" stroke-width="1.1"/></g><g transform="translate(828.2 670.8)"><g transform="rotate(12)"><ellipse rx="12.3" ry="8.5" fill="#f4f4dc" stroke-width="1.45"/><ellipse cy="-.6" rx="10.9" ry="7.4" fill="url(#gcone)" stroke-width="1.2"/></g><circle cx="-.2" cy="-6.4" r="1.85" fill="#fff" stroke="#101018" stroke-width="1.1"/></g><g transform="translate(950.4 672.5)"><g transform="rotate(12)"><ellipse rx="12.3" ry="8.5" fill="#f4f4dc" stroke-width="1.45"/><ellipse cy="-.6" rx="10.9" ry="7.4" fill="url(#gcone)" stroke-width="1.2"/></g><circle cx="-.2" cy="-6.4" r="1.85" fill="#fff" stroke="#101018" stroke-width="1.1"/></g><g transform="translate(1072.6 674.1)"><g transform="rotate(12)"><ellipse rx="12.3" ry="8.5" fill="#f4f4dc" stroke-width="1.45"/><ellipse cy="-.6" rx="10.9" ry="7.4" fill="url(#gcone)" stroke-width="1.2"/></g><circle cx="-.2" cy="-6.4" r="1.85" fill="#fff" stroke="#101018" stroke-width="1.1"/></g><g transform="translate(923.1 676.3)"><g transform="rotate(12)"><ellipse rx="12.3" ry="8.5" fill="#f4f4dc" stroke-width="1.45"/><ellipse cy="-.6" rx="10.9" ry="7.4" fill="url(#gcone)" stroke-width="1.2"/></g><circle cx="-.2" cy="-6.4" r="1.85" fill="#fff" stroke="#101018" stroke-width="1.1"/></g><g transform="translate(1045.2 677.9)"><g transform="rotate(12)"><ellipse rx="12.3" ry="8.5" fill="#f4f4dc" stroke-width="1.45"/><ellipse cy="-.6" rx="10.9" ry="7.4" fill="url(#gcone)" stroke-width="1.2"/></g><circle cx="-.2" cy="-6.4" r="1.85" fill="#fff" stroke="#101018" stroke-width="1.1"/></g><g transform="translate(895.7 680.1)"><g transform="rotate(12)"><ellipse rx="12.3" ry="8.5" fill="#f4f4dc" stroke-width="1.45"/><ellipse cy="-.6" rx="10.9" ry="7.4" fill="url(#gcone)" stroke-width="1.2"/></g><circle cx="-.2" cy="-6.4" r="1.85" fill="#fff" stroke="#101018" stroke-width="1.1"/></g><g transform="translate(1017.9 681.7)"><g transform="rotate(12)"><ellipse rx="12.3" ry="8.5" fill="#f4f4dc" stroke-width="1.45"/><ellipse cy="-.6" rx="10.9" ry="7.4" fill="url(#gcone)" stroke-width="1.2"/></g><circle cx="-.2" cy="-6.4" r="1.85" fill="#fff" stroke="#101018" stroke-width="1.1"/></g><g transform="translate(868.4 683.9)"><g transform="rotate(12)"><ellipse rx="12.3" ry="8.5" fill="#f4f4dc" stroke-width="1.45"/><ellipse cy="-.6" rx="10.9" ry="7.4" fill="url(#gcone)" stroke-width="1.2"/></g><circle cx="-.2" cy="-6.4" r="1.85" fill="#fff" stroke="#101018" stroke-width="1.1"/></g><g transform="translate(990.5 685.5)"><g transform="rotate(12)"><ellipse rx="12.3" ry="8.5" fill="#f4f4dc" stroke-width="1.45"/><ellipse cy="-.6" rx="10.9" ry="7.4" fill="url(#gcone)" stroke-width="1.2"/></g><circle cx="-.2" cy="-6.4" r="1.85" fill="#fff" stroke="#101018" stroke-width="1.1"/></g><g transform="translate(963.2 689.3)"><g transform="rotate(12)"><ellipse rx="12.3" ry="8.5" fill="#f4f4dc" stroke-width="1.45"/><ellipse cy="-.6" rx="10.9" ry="7.4" fill="url(#gcone)" stroke-width="1.2"/></g><circle cx="-.2" cy="-6.4" r="1.85" fill="#fff" stroke="#101018" stroke-width="1.1"/></g><g transform="translate(1085.4 691.0)"><g transform="rotate(12)"><ellipse rx="12.3" ry="8.5" fill="#f4f4dc" stroke-width="1.45"/><ellipse cy="-.6" rx="10.9" ry="7.4" fill="url(#gcone)" stroke-width="1.2"/></g><circle cx="-.2" cy="-6.4" r="1.85" fill="#fff" stroke="#101018" stroke-width="1.1"/></g><g transform="translate(935.8 693.1)"><g transform="rotate(12)"><ellipse rx="12.3" ry="8.5" fill="#f4f4dc" stroke-width="1.45"/><ellipse cy="-.6" rx="10.9" ry="7.4" fill="url(#gcone)" stroke-width="1.2"/></g><circle cx="-.2" cy="-6.4" r="1.85" fill="#fff" stroke="#101018" stroke-width="1.1"/></g><g transform="translate(1058.0 694.8)"><g transform="rotate(12)"><ellipse rx="12.3" ry="8.5" fill="#f4f4dc" stroke-width="1.45"/><ellipse cy="-.6" rx="10.9" ry="7.4" fill="url(#gcone)" stroke-width="1.2"/></g><circle cx="-.2" cy="-6.4" r="1.85" fill="#fff" stroke="#101018" stroke-width="1.1"/></g><g transform="translate(908.5 696.9)"><g transform="rotate(12)"><ellipse rx="12.3" ry="8.5" fill="#f4f4dc" stroke-width="1.45"/><ellipse cy="-.6" rx="10.9" ry="7.4" fill="url(#gcone)" stroke-width="1.2"/></g><circle cx="-.2" cy="-6.4" r="1.85" fill="#fff" stroke="#101018" stroke-width="1.1"/></g><g transform="translate(1030.7 698.6)"><g transform="rotate(12)"><ellipse rx="12.3" ry="8.5" fill="#f4f4dc" stroke-width="1.45"/><ellipse cy="-.6" rx="10.9" ry="7.4" fill="url(#gcone)" stroke-width="1.2"/></g><circle cx="-.2" cy="-6.4" r="1.85" fill="#fff" stroke="#101018" stroke-width="1.1"/></g><g transform="translate(1003.3 702.4)"><g transform="rotate(12)"><ellipse rx="12.3" ry="8.5" fill="#f4f4dc" stroke-width="1.45"/><ellipse cy="-.6" rx="10.9" ry="7.4" fill="url(#gcone)" stroke-width="1.2"/></g><circle cx="-.2" cy="-6.4" r="1.85" fill="#fff" stroke="#101018" stroke-width="1.1"/></g><g transform="translate(1125.5 704.0)"><g transform="rotate(12)"><ellipse rx="12.3" ry="8.5" fill="#f4f4dc" stroke-width="1.45"/><ellipse cy="-.6" rx="10.9" ry="7.4" fill="url(#gcone)" stroke-width="1.2"/></g><circle cx="-.2" cy="-6.4" r="1.85" fill="#fff" stroke="#101018" stroke-width="1.1"/></g><g transform="translate(976.0 706.2)"><g transform="rotate(12)"><ellipse rx="12.3" ry="8.5" fill="#f4f4dc" stroke-width="1.45"/><ellipse cy="-.6" rx="10.9" ry="7.4" fill="url(#gcone)" stroke-width="1.2"/></g><circle cx="-.2" cy="-6.4" r="1.85" fill="#fff" stroke="#101018" stroke-width="1.1"/></g><g transform="translate(1098.1 707.8)"><g transform="rotate(12)"><ellipse rx="12.3" ry="8.5" fill="#f4f4dc" stroke-width="1.45"/><ellipse cy="-.6" rx="10.9" ry="7.4" fill="url(#gcone)" stroke-width="1.2"/></g><circle cx="-.2" cy="-6.4" r="1.85" fill="#fff" stroke="#101018" stroke-width="1.1"/></g><g transform="translate(948.6 710.0)"><g transform="rotate(12)"><ellipse rx="12.3" ry="8.5" fill="#f4f4dc" stroke-width="1.45"/><ellipse cy="-.6" rx="10.9" ry="7.4" fill="url(#gcone)" stroke-width="1.2"/></g><circle cx="-.2" cy="-6.4" r="1.85" fill="#fff" stroke="#101018" stroke-width="1.1"/></g><g transform="translate(1070.8 711.6)"><g transform="rotate(12)"><ellipse rx="12.3" ry="8.5" fill="#f4f4dc" stroke-width="1.45"/><ellipse cy="-.6" rx="10.9" ry="7.4" fill="url(#gcone)" stroke-width="1.2"/></g><circle cx="-.2" cy="-6.4" r="1.85" fill="#fff" stroke="#101018" stroke-width="1.1"/></g><g transform="translate(1043.5 715.4)"><g transform="rotate(12)"><ellipse rx="12.3" ry="8.5" fill="#f4f4dc" stroke-width="1.45"/><ellipse cy="-.6" rx="10.9" ry="7.4" fill="url(#gcone)" stroke-width="1.2"/></g><circle cx="-.2" cy="-6.4" r="1.85" fill="#fff" stroke="#101018" stroke-width="1.1"/></g><g transform="translate(1016.1 719.2)"><g transform="rotate(12)"><ellipse rx="12.3" ry="8.5" fill="#f4f4dc" stroke-width="1.45"/><ellipse cy="-.6" rx="10.9" ry="7.4" fill="url(#gcone)" stroke-width="1.2"/></g><circle cx="-.2" cy="-6.4" r="1.85" fill="#fff" stroke="#101018" stroke-width="1.1"/></g><g transform="translate(1138.3 720.8)"><g transform="rotate(12)"><ellipse rx="12.3" ry="8.5" fill="#f4f4dc" stroke-width="1.45"/><ellipse cy="-.6" rx="10.9" ry="7.4" fill="url(#gcone)" stroke-width="1.2"/></g><circle cx="-.2" cy="-6.4" r="1.85" fill="#fff" stroke="#101018" stroke-width="1.1"/></g><g transform="translate(988.8 723.0)"><g transform="rotate(12)"><ellipse rx="12.3" ry="8.5" fill="#f4f4dc" stroke-width="1.45"/><ellipse cy="-.6" rx="10.9" ry="7.4" fill="url(#gcone)" stroke-width="1.2"/></g><circle cx="-.2" cy="-6.4" r="1.85" fill="#fff" stroke="#101018" stroke-width="1.1"/></g><g transform="translate(1110.9 724.6)"><g transform="rotate(12)"><ellipse rx="12.3" ry="8.5" fill="#f4f4dc" stroke-width="1.45"/><ellipse cy="-.6" rx="10.9" ry="7.4" fill="url(#gcone)" stroke-width="1.2"/></g><circle cx="-.2" cy="-6.4" r="1.85" fill="#fff" stroke="#101018" stroke-width="1.1"/></g><g transform="translate(1083.6 728.4)"><g transform="rotate(12)"><ellipse rx="12.3" ry="8.5" fill="#f4f4dc" stroke-width="1.45"/><ellipse cy="-.6" rx="10.9" ry="7.4" fill="url(#gcone)" stroke-width="1.2"/></g><circle cx="-.2" cy="-6.4" r="1.85" fill="#fff" stroke="#101018" stroke-width="1.1"/></g><g transform="translate(1056.2 732.2)"><g transform="rotate(12)"><ellipse rx="12.3" ry="8.5" fill="#f4f4dc" stroke-width="1.45"/><ellipse cy="-.6" rx="10.9" ry="7.4" fill="url(#gcone)" stroke-width="1.2"/></g><circle cx="-.2" cy="-6.4" r="1.85" fill="#fff" stroke="#101018" stroke-width="1.1"/></g><g transform="translate(1028.9 736.0)"><g transform="rotate(12)"><ellipse rx="12.3" ry="8.5" fill="#f4f4dc" stroke-width="1.45"/><ellipse cy="-.6" rx="10.9" ry="7.4" fill="url(#gcone)" stroke-width="1.2"/></g><circle cx="-.2" cy="-6.4" r="1.85" fill="#fff" stroke="#101018" stroke-width="1.1"/></g><g transform="translate(1151.1 737.7)"><g transform="rotate(12)"><ellipse rx="12.3" ry="8.5" fill="#f4f4dc" stroke-width="1.45"/><ellipse cy="-.6" rx="10.9" ry="7.4" fill="url(#gcone)" stroke-width="1.2"/></g><circle cx="-.2" cy="-6.4" r="1.85" fill="#fff" stroke="#101018" stroke-width="1.1"/></g><g transform="translate(1123.7 741.5)"><g transform="rotate(12)"><ellipse rx="12.3" ry="8.5" fill="#f4f4dc" stroke-width="1.45"/><ellipse cy="-.6" rx="10.9" ry="7.4" fill="url(#gcone)" stroke-width="1.2"/></g><circle cx="-.2" cy="-6.4" r="1.85" fill="#fff" stroke="#101018" stroke-width="1.1"/></g><g transform="translate(1096.4 745.3)"><g transform="rotate(12)"><ellipse rx="12.3" ry="8.5" fill="#f4f4dc" stroke-width="1.45"/><ellipse cy="-.6" rx="10.9" ry="7.4" fill="url(#gcone)" stroke-width="1.2"/></g><circle cx="-.2" cy="-6.4" r="1.85" fill="#fff" stroke="#101018" stroke-width="1.1"/></g><g transform="translate(1069.0 749.1)"><g transform="rotate(12)"><ellipse rx="12.3" ry="8.5" fill="#f4f4dc" stroke-width="1.45"/><ellipse cy="-.6" rx="10.9" ry="7.4" fill="url(#gcone)" stroke-width="1.2"/></g><circle cx="-.2" cy="-6.4" r="1.85" fill="#fff" stroke="#101018" stroke-width="1.1"/></g><g transform="translate(1191.2 750.7)"><g transform="rotate(12)"><ellipse rx="12.3" ry="8.5" fill="#f4f4dc" stroke-width="1.45"/><ellipse cy="-.6" rx="10.9" ry="7.4" fill="url(#gcone)" stroke-width="1.2"/></g><circle cx="-.2" cy="-6.4" r="1.85" fill="#fff" stroke="#101018" stroke-width="1.1"/></g><g transform="translate(1163.8 754.5)"><g transform="rotate(12)"><ellipse rx="12.3" ry="8.5" fill="#f4f4dc" stroke-width="1.45"/><ellipse cy="-.6" rx="10.9" ry="7.4" fill="url(#gcone)" stroke-width="1.2"/></g><circle cx="-.2" cy="-6.4" r="1.85" fill="#fff" stroke="#101018" stroke-width="1.1"/></g><g transform="translate(1136.5 758.3)"><g transform="rotate(12)"><ellipse rx="12.3" ry="8.5" fill="#f4f4dc" stroke-width="1.45"/><ellipse cy="-.6" rx="10.9" ry="7.4" fill="url(#gcone)" stroke-width="1.2"/></g><circle cx="-.2" cy="-6.4" r="1.85" fill="#fff" stroke="#101018" stroke-width="1.1"/></g><g transform="translate(1109.1 762.1)"><g transform="rotate(12)"><ellipse rx="12.3" ry="8.5" fill="#f4f4dc" stroke-width="1.45"/><ellipse cy="-.6" rx="10.9" ry="7.4" fill="url(#gcone)" stroke-width="1.2"/></g><circle cx="-.2" cy="-6.4" r="1.85" fill="#fff" stroke="#101018" stroke-width="1.1"/></g><g transform="translate(1204.0 767.6)"><g transform="rotate(12)"><ellipse rx="12.3" ry="8.5" fill="#f4f4dc" stroke-width="1.45"/><ellipse cy="-.6" rx="10.9" ry="7.4" fill="url(#gcone)" stroke-width="1.2"/></g><circle cx="-.2" cy="-6.4" r="1.85" fill="#fff" stroke="#101018" stroke-width="1.1"/></g><g transform="translate(1176.6 771.4)"><g transform="rotate(12)"><ellipse rx="12.3" ry="8.5" fill="#f4f4dc" stroke-width="1.45"/><ellipse cy="-.6" rx="10.9" ry="7.4" fill="url(#gcone)" stroke-width="1.2"/></g><circle cx="-.2" cy="-6.4" r="1.85" fill="#fff" stroke="#101018" stroke-width="1.1"/></g><g transform="translate(1149.3 775.2)"><g transform="rotate(12)"><ellipse rx="12.3" ry="8.5" fill="#f4f4dc" stroke-width="1.45"/><ellipse cy="-.6" rx="10.9" ry="7.4" fill="url(#gcone)" stroke-width="1.2"/></g><circle cx="-.2" cy="-6.4" r="1.85" fill="#fff" stroke="#101018" stroke-width="1.1"/></g><g transform="translate(1216.8 784.4)"><g transform="rotate(12)"><ellipse rx="12.3" ry="8.5" fill="#f4f4dc" stroke-width="1.45"/><ellipse cy="-.6" rx="10.9" ry="7.4" fill="url(#gcone)" stroke-width="1.2"/></g><circle cx="-.2" cy="-6.4" r="1.85" fill="#fff" stroke="#101018" stroke-width="1.1"/></g><g transform="translate(1189.4 788.2)"><g transform="rotate(12)"><ellipse rx="12.3" ry="8.5" fill="#f4f4dc" stroke-width="1.45"/><ellipse cy="-.6" rx="10.9" ry="7.4" fill="url(#gcone)" stroke-width="1.2"/></g><circle cx="-.2" cy="-6.4" r="1.85" fill="#fff" stroke="#101018" stroke-width="1.1"/></g><g transform="translate(1229.5 801.2)"><g transform="rotate(12)"><ellipse rx="12.3" ry="8.5" fill="#f4f4dc" stroke-width="1.45"/><ellipse cy="-.6" rx="10.9" ry="7.4" fill="url(#gcone)" stroke-width="1.2"/></g><circle cx="-.2" cy="-6.4" r="1.85" fill="#fff" stroke="#101018" stroke-width="1.1"/></g></g>
<g fill="none" stroke="#1c1c24" stroke-width="1.25" stroke-linecap="round">
<path d="M565.8 586.9C566.3 586.1 567.6 583.4 569.0 582.0C570.4 580.6 572.0 579.6 574.0 578.8C576.0 578.0 576.7 577.6 581.0 577.0C585.3 576.4 590.2 575.8 600.0 575.3C609.8 574.8 624.2 574.3 640.0 574.3C655.8 574.3 675.9 574.6 694.6 575.4C713.3 576.2 733.1 577.3 752.3 579.2C771.5 581.1 794.0 584.5 810.0 586.9C826.0 589.3 836.8 591.5 848.5 593.7C860.2 596.0 867.2 597.0 880.0 600.4C892.8 603.8 910.1 608.8 925.2 613.9C940.3 619.0 955.4 625.2 970.5 630.9C985.6 636.6 1000.6 641.9 1015.7 647.9C1030.8 653.9 1045.9 660.3 1061.0 667.1C1076.1 673.9 1091.1 680.5 1106.2 688.6C1121.3 696.7 1136.4 705.9 1151.5 715.7C1166.6 725.5 1185.4 739.1 1196.7 747.4C1208.0 755.7 1212.6 759.5 1219.4 765.5C1226.2 771.5 1232.6 778.3 1237.5 783.6C1242.4 788.9 1246.3 793.2 1248.8 797.2C1251.2 801.2 1251.6 805.7 1252.2 807.4" stroke-width="1.6"/>
<path d="M337.6 438.8C338.6 437.6 340.8 434.6 343.5 431.5C346.2 428.4 347.9 425.4 353.9 420.0C359.8 414.6 368.4 406.5 379.2 399.0C390.0 391.5 405.6 382.1 418.8 375.2C432.0 368.3 445.2 362.5 458.4 357.4C471.6 352.2 484.8 347.9 498.0 344.3C511.2 340.7 526.7 337.8 537.6 335.6C548.5 333.4 550.1 332.2 563.3 330.9C576.5 329.6 601.2 328.2 616.7 327.7C632.2 327.1 642.8 327.5 656.0 327.6C669.2 327.7 682.7 327.9 695.9 328.5C709.1 329.1 721.8 329.9 735.0 331.0C748.2 332.1 761.9 333.4 775.1 334.8C788.3 336.2 800.8 337.7 814.0 339.5C827.2 341.3 841.0 343.4 854.3 345.5C867.6 347.6 880.8 350.0 894.0 352.3C907.2 354.6 922.5 357.4 933.5 359.3C944.5 361.2 949.2 361.5 960.0 363.5C970.8 365.5 987.1 368.6 998.5 371.3C1009.9 374.1 1018.4 377.0 1028.3 380.0C1038.2 383.0 1048.2 386.1 1058.1 389.4C1068.0 392.6 1077.9 396.0 1087.8 399.5C1097.7 403.0 1107.6 406.6 1117.5 410.4C1127.4 414.2 1137.3 418.1 1147.2 422.2C1157.1 426.2 1167.1 430.3 1177.0 434.7C1186.9 439.1 1196.8 443.6 1206.7 448.3C1216.6 453.0 1226.6 457.9 1236.5 463.0C1246.4 468.1 1256.3 473.4 1266.2 478.9C1276.1 484.4 1286.1 490.1 1296.0 496.1C1305.9 502.1 1315.8 508.3 1325.6 514.9C1335.4 521.5 1345.3 528.4 1355.1 535.6C1364.9 542.8 1374.7 550.4 1384.6 558.3C1394.5 566.2 1404.4 574.5 1414.3 583.0C1424.2 591.5 1436.9 603.2 1444.1 609.6C1451.3 616.0 1451.8 614.9 1457.4 621.5C1463.1 628.1 1472.1 639.6 1478.0 649.1C1483.9 658.6 1489.2 670.1 1492.9 678.8C1496.6 687.5 1498.7 695.5 1500.3 701.1C1501.9 706.8 1502.0 710.8 1502.3 712.7"/>
<path d="M408.9 462.3C409.6 460.9 410.7 457.9 413.0 454.0C415.3 450.1 417.2 444.7 422.6 439.2C428.0 433.7 438.0 426.1 445.2 421.1C452.4 416.2 458.4 413.3 466.0 409.5C473.6 405.7 482.8 401.4 490.5 398.5C498.2 395.6 504.5 393.9 512.0 392.0C519.5 390.1 526.1 388.7 535.7 387.1C545.3 385.5 559.5 383.7 569.7 382.6C579.9 381.6 587.6 381.2 597.0 380.8C606.4 380.4 615.7 380.0 626.2 379.9C636.7 379.8 648.7 379.9 660.0 380.0C671.3 380.1 679.9 380.1 694.1 380.8C708.3 381.5 727.4 382.8 745.0 384.0C762.6 385.2 781.8 386.1 800.0 388.3C818.2 390.5 836.6 394.1 854.3 397.0C872.0 399.9 888.4 402.6 906.0 406.0C923.6 409.4 944.3 413.7 960.0 417.3C975.7 420.9 987.9 424.6 1000.0 427.8C1012.1 431.0 1021.1 433.1 1032.4 436.5C1043.7 439.9 1055.9 444.2 1068.0 448.5C1080.1 452.8 1092.9 457.1 1104.9 462.0C1116.9 466.9 1127.9 472.2 1140.0 478.0C1152.1 483.8 1170.1 493.3 1177.3 497.0C1184.5 500.7 1173.6 494.5 1183.3 500.0C1193.0 505.5 1217.7 519.0 1235.7 530.1C1253.7 541.2 1274.0 555.0 1291.4 566.9C1308.8 578.8 1326.9 591.2 1340.0 601.4C1353.1 611.6 1361.1 619.6 1370.0 628.0C1378.9 636.4 1386.9 644.2 1393.4 651.6C1399.9 659.0 1404.2 664.2 1409.0 672.4C1413.8 680.6 1419.0 691.5 1422.0 701.0C1425.0 710.5 1426.6 719.7 1427.2 729.5C1427.8 739.3 1426.8 751.9 1425.5 760.0C1424.2 768.1 1421.8 773.0 1419.5 778.0C1417.2 783.0 1412.8 788.0 1411.5 790.0"/>
<path d="M412.8 468.3C413.3 467.2 414.4 464.2 416.0 462.0C417.6 459.8 417.7 459.6 422.6 455.0C427.5 450.4 438.0 440.3 445.2 434.7C452.4 429.1 458.4 425.6 466.0 421.5C473.6 417.4 482.8 412.9 490.5 409.8C498.2 406.7 504.5 405.1 512.0 403.0C519.5 400.9 526.1 399.0 535.7 397.3C545.3 395.6 559.5 393.9 569.7 392.8C579.9 391.8 587.6 391.4 597.0 391.0C606.4 390.6 615.7 390.2 626.2 390.1C636.7 390.0 648.7 390.1 660.0 390.3C671.3 390.5 679.9 390.5 694.1 391.2C708.3 391.9 727.4 393.1 745.0 394.5C762.6 395.9 781.8 397.4 800.0 399.6C818.2 401.9 836.6 405.1 854.3 408.0C872.0 410.9 888.4 413.8 906.0 417.0C923.6 420.2 944.3 423.7 960.0 427.4C975.7 431.1 987.9 435.6 1000.0 439.0C1012.1 442.4 1021.1 444.5 1032.4 448.0C1043.7 451.5 1055.9 455.7 1068.0 460.0C1080.1 464.3 1092.9 469.0 1104.9 474.0C1116.9 479.0 1127.5 483.9 1140.0 490.0C1152.5 496.1 1164.0 501.7 1180.0 510.6C1196.0 519.5 1217.1 531.7 1235.7 543.5C1254.3 555.3 1274.0 569.2 1291.4 581.3C1308.8 593.4 1327.6 606.1 1340.0 615.9C1352.4 625.7 1358.2 632.8 1366.0 640.0C1373.8 647.2 1381.1 653.1 1386.9 659.4C1392.7 665.7 1396.5 669.4 1401.0 677.6C1405.5 685.8 1410.9 698.4 1414.0 708.8C1417.1 719.2 1418.8 731.5 1419.4 740.0C1420.0 748.5 1418.9 753.3 1417.5 760.0C1416.1 766.7 1413.1 775.2 1411.0 780.0C1408.9 784.8 1406.0 787.1 1405.0 788.5"/>
<path d="M413.7 489.4C414.2 488.5 415.5 486.0 417.0 484.0C418.5 482.0 417.9 482.1 422.6 477.6C427.3 473.2 438.0 462.8 445.2 457.3C452.4 451.8 458.4 448.6 466.0 444.5C473.6 440.4 482.8 435.6 490.5 432.4C498.2 429.2 504.5 427.6 512.0 425.5C519.5 423.4 525.9 421.9 535.7 420.0C545.5 418.1 560.6 415.5 570.8 414.3C581.0 413.1 587.8 413.1 597.0 412.7C606.2 412.3 615.7 412.1 626.2 412.0C636.7 411.9 648.7 412.0 660.0 412.2C671.3 412.4 679.9 412.6 694.1 413.2C708.3 413.8 727.4 414.8 745.0 416.0C762.6 417.2 781.8 418.4 800.0 420.6C818.2 422.9 836.6 426.5 854.3 429.5C872.0 432.5 888.4 435.3 906.0 438.5C923.6 441.7 944.3 445.0 960.0 448.7C975.7 452.4 987.9 456.9 1000.0 460.5C1012.1 464.1 1021.1 466.8 1032.4 470.4C1043.7 474.0 1055.9 477.7 1068.0 482.0C1080.1 486.3 1092.9 491.0 1104.9 496.0C1116.9 501.0 1127.5 506.1 1140.0 512.0C1152.5 517.9 1164.0 522.4 1180.0 531.2C1196.0 540.0 1217.1 552.7 1235.7 564.6C1254.3 576.5 1277.9 593.3 1291.4 602.5C1305.0 611.7 1308.2 613.2 1317.0 620.0C1325.8 626.8 1335.8 636.2 1344.0 643.5C1352.2 650.8 1359.1 657.5 1366.0 664.0C1372.9 670.5 1380.4 677.0 1385.6 682.8C1390.8 688.6 1393.5 693.3 1397.0 699.0C1400.5 704.7 1403.7 711.0 1406.4 717.0C1409.1 723.0 1411.3 729.5 1413.0 735.0C1414.7 740.5 1416.0 745.0 1416.8 750.0C1417.6 755.0 1417.5 762.5 1417.6 765.0"/>
<path d="M569.7 382.6C569.9 385.5 570.6 394.7 571.0 400.0C571.4 405.3 571.6 406.8 572.0 414.3C572.4 421.8 572.8 435.2 573.2 445.0C573.6 454.8 573.7 463.9 574.2 473.1C574.7 482.3 575.2 490.6 576.0 500.0C576.8 509.4 577.9 520.9 578.7 529.7C579.5 538.5 580.0 545.5 581.0 553.0C582.0 560.5 583.8 571.3 584.4 575.0"/>
<path d="M1388.0 651.8C1387.9 654.0 1387.8 660.6 1387.5 665.0C1387.2 669.4 1387.4 672.9 1386.5 677.9C1385.6 682.9 1383.8 689.4 1382.0 695.0C1380.2 700.6 1378.4 705.9 1375.7 711.6C1373.0 717.3 1369.6 723.4 1366.0 729.0C1362.4 734.6 1358.6 740.1 1354.3 745.3C1350.0 750.5 1345.1 755.4 1340.0 760.0C1334.9 764.6 1329.2 769.0 1323.7 772.8C1318.2 776.6 1312.6 779.9 1307.0 783.0C1301.4 786.1 1295.0 789.2 1290.0 791.2C1285.0 793.2 1281.1 794.1 1277.0 795.0C1272.9 795.9 1268.7 796.5 1265.4 796.7C1262.1 796.9 1259.3 796.4 1257.0 796.0C1254.7 795.6 1252.6 794.6 1251.7 794.3"/>
<path d="M1650.4 746.4C1651.3 746.7 1654.5 747.4 1656.0 748.3C1657.5 749.1 1658.7 750.2 1659.6 751.5C1660.5 752.8 1661.3 754.6 1661.6 756.0C1661.9 757.4 1662.1 758.4 1661.6 760.0C1661.1 761.6 1659.0 764.6 1658.5 765.5"/>
<path d="M1502.3 712.7C1502.9 714.1 1504.8 718.0 1506.0 721.0C1507.2 724.0 1508.3 727.3 1509.4 731.0C1510.5 734.7 1511.8 738.9 1512.5 743.0C1513.2 747.1 1513.4 751.6 1513.5 755.6C1513.6 759.6 1513.6 763.3 1513.3 767.0C1513.0 770.7 1512.2 774.4 1511.5 778.0C1510.8 781.6 1510.0 785.1 1509.0 788.5C1508.0 791.9 1506.8 795.3 1505.4 798.5C1504.0 801.7 1502.4 804.6 1500.5 807.5C1498.6 810.4 1495.1 814.4 1494.0 815.8"/>
<path d="M1502.3 712.7C1501.8 714.8 1500.7 720.9 1499.5 725.0C1498.3 729.1 1496.8 732.6 1495.0 737.2C1493.2 741.8 1490.9 747.4 1488.5 752.5C1486.1 757.6 1484.0 762.2 1480.8 767.8C1477.6 773.4 1473.4 780.0 1469.5 786.0C1465.6 792.0 1459.4 801.0 1457.4 804.0"/>
<path d="M1661.6 761.7C1662.6 762.2 1665.6 763.4 1667.5 764.8C1669.4 766.2 1671.2 768.0 1672.8 769.9C1674.3 771.8 1675.8 774.0 1676.8 776.0C1677.8 778.0 1678.6 781.0 1679.0 782.0"/>
<path d="M1502.3 712.7L1650.4 746.4M1658.5 765.5L1599.3 850.5M1652.4 745.4L1654.5 741.3M1502.3 712.7L1517.6 700.4M563.3 323.8L563.3 330.9M1457.4 621.5C1460 620 1464 619.3 1468.8 620.3M1251.7 794.3L1250 806.5"/>
</g>
<path d="M330.4 438.8L406.0 460.8C406.8 461.2 409.8 462.1 411.0 463.5C412.2 464.9 412.7 464.7 413.1 469.0C413.6 473.3 413.2 483.9 413.7 489.4C414.2 494.8 414.4 496.2 416.2 501.7C418.0 507.1 421.0 515.3 424.4 522.1C427.8 528.9 431.8 536.0 436.6 542.5C441.4 549.0 446.9 555.1 453.0 560.9C459.1 566.7 466.6 572.8 473.4 577.2C480.2 581.6 487.0 584.8 493.8 587.4C500.6 590.0 507.4 591.5 514.2 592.6C521.0 593.7 527.8 594.4 534.6 594.0C541.4 593.6 549.5 591.8 555.0 590.5C560.5 589.2 564.5 586.9 567.3 586.4C570.1 585.9 571.2 587.1 572.0 587.3L577.5 589.3L577.9 589.6L585.6 585.0L587.5 584.9L588.7 585.8L597.5 596.0L599.3 596.9L618.0 602.6L625.7 598.0L627.6 597.9L628.8 598.8L637.6 609.0L639.4 609.9L658.2 615.7L665.9 611.1L667.8 611.0L669.0 611.9L677.8 622.1L679.6 623.0L698.3 628.7L706.0 624.1L707.9 624.0L709.1 624.9L717.9 635.1L719.7 636.0L738.4 641.8L746.1 637.2L748.0 637.1L749.2 638.0L758.0 648.2L759.8 649.1L778.5 654.8L786.2 650.2L788.1 650.1L789.3 651.0L798.1 661.2L799.9 662.1L818.7 667.8L826.4 663.2L828.3 663.1L829.5 664.0L838.3 674.2L840.1 675.1L858.8 680.9L866.5 676.3L868.4 676.2L869.6 677.1L878.4 687.3L880.2 688.2L898.9 693.9L906.6 689.3L908.5 689.2L909.7 690.1L918.5 700.3L920.3 701.2L939.1 707.0L946.8 702.4L948.7 702.3L949.9 703.2L958.7 713.4L960.5 714.3L979.2 720.0L986.9 715.4L988.8 715.3L990.0 716.2L998.8 726.4L1000.6 727.3L1019.3 733.0L1027.0 728.4L1028.9 728.3L1030.1 729.2L1038.9 739.4L1040.7 740.3L1059.5 746.1L1067.2 741.5L1069.1 741.4L1070.3 742.3L1079.1 752.5L1080.9 753.4L1099.6 759.1L1107.3 754.5L1109.2 754.4L1110.4 755.3L1119.2 765.5L1121.0 766.4L1139.7 772.2L1147.4 767.6L1149.3 767.5L1150.5 768.4L1159.3 778.6L1161.1 779.5L1179.8 785.2L1187.5 780.6L1189.4 780.5L1190.6 781.4L1199.4 791.6L1201.2 792.5L1220.0 798.2L1227.7 793.6L1229.6 793.5L1230.8 794.4L1239.6 804.6L1241.4 805.5L1244.0 807.3C1244.8 807.6 1245.7 806.6 1248.8 809.2C1251.9 811.8 1257.3 818.3 1262.4 822.8C1267.5 827.3 1273.7 832.4 1279.4 836.4C1285.1 840.4 1290.8 843.5 1296.4 846.5C1302.1 849.5 1307.7 852.2 1313.3 854.2C1318.9 856.2 1324.6 857.5 1330.3 858.4C1336.0 859.3 1341.6 859.9 1347.3 859.8C1353.0 859.7 1359.1 858.8 1364.2 857.6C1369.3 856.4 1373.5 854.9 1377.8 852.5C1382.0 850.1 1386.6 846.4 1389.7 843.1C1392.8 839.9 1394.8 836.4 1396.5 833.0C1398.2 829.6 1399.1 826.5 1399.9 822.8C1400.7 819.1 1401.0 815.5 1401.2 810.9C1401.5 806.3 1401.2 798.4 1401.4 795.0C1401.6 791.6 1401.7 791.3 1402.6 790.3C1403.5 789.3 1406.0 789.0 1406.7 788.8L1457.6 804.5C1459.8 804.5 1467.0 803.9 1471.0 804.5C1475.0 805.1 1477.6 806.4 1481.3 808.4C1485.0 810.4 1491.1 815.1 1493.1 816.4L1599.3 850.5C1601.0 851.4 1606.6 853.1 1609.5 855.7C1612.4 858.3 1615.3 863.2 1616.7 865.9C1618.1 868.6 1617.9 870.3 1617.7 872.0C1617.5 873.7 1617.1 874.5 1615.7 876.0C1614.3 877.5 1612.2 880.5 1609.5 881.2C1606.8 881.9 1603.0 881.4 1599.3 880.2C1595.5 879.0 1590.0 876.2 1587.0 874.0C1584.0 871.8 1582.3 868.3 1581.0 866.9C1579.7 865.5 1579.2 865.7 1578.9 865.5L1495.1 838.3C1494.4 839.0 1492.8 841.7 1491.0 842.4C1489.2 843.1 1485.2 842.4 1484.0 842.4L1455.9 833.3C1455.1 833.2 1452.2 832.1 1450.8 832.6C1449.4 833.1 1448.2 834.4 1447.4 836.4C1446.6 838.4 1446.6 841.4 1445.7 844.8C1444.8 848.2 1444.0 852.5 1442.3 856.7C1440.6 861.0 1438.6 865.8 1435.5 870.3C1432.4 874.8 1428.4 879.9 1423.6 883.9C1418.8 887.9 1412.3 891.6 1406.7 894.1C1401.1 896.6 1395.4 897.8 1389.7 899.1C1384.0 900.5 1379.5 901.6 1372.7 902.2C1365.9 902.9 1354.1 902.2 1349.0 903.0C1343.9 903.8 1345.0 906.1 1342.2 906.8C1339.4 907.5 1335.4 907.9 1332.0 907.3C1328.6 906.7 1325.2 905.3 1321.8 903.4C1318.4 901.5 1314.4 898.3 1311.6 895.8C1308.8 893.2 1307.3 890.2 1304.8 888.1C1302.3 886.0 1300.6 886.0 1296.4 883.0C1292.2 880.0 1285.1 875.0 1279.4 870.3C1273.7 865.6 1267.2 859.4 1262.4 855.0C1257.6 850.6 1253.3 846.2 1250.5 844.0C1247.7 841.8 1246.3 842.2 1245.5 841.8L567.3 621.1C564.6 622.0 556.5 624.9 551.0 626.3C545.5 627.7 540.7 628.8 534.6 629.3C528.5 629.8 518.5 628.8 514.2 629.3C510.0 629.8 511.1 631.5 509.1 632.4C507.1 633.2 505.2 634.6 502.0 634.4C498.8 634.2 493.4 632.9 489.7 631.4C485.9 629.9 482.9 627.8 479.5 625.2C476.1 622.6 472.4 618.4 469.3 616.0C466.2 613.6 465.5 614.0 461.1 611.0C456.7 608.0 448.8 602.7 442.7 597.7C436.6 592.8 430.2 587.1 424.4 581.3C418.6 575.5 413.4 569.8 408.0 563.0C402.6 556.2 396.5 547.7 391.7 540.5C386.9 533.3 382.8 526.5 379.4 520.0C376.0 513.5 373.2 506.8 371.3 501.7C369.4 496.6 369.1 492.8 368.2 489.4C367.3 486.0 367.7 483.6 366.2 481.3C364.7 479.0 362.6 477.1 359.0 475.5C355.4 473.9 349.5 473.1 344.7 471.5C339.9 469.9 334.1 468.1 330.4 466.0C326.7 463.9 324.1 461.5 322.3 458.8C320.5 456.1 319.7 452.2 319.6 449.6C319.5 447.0 320.6 444.6 321.5 443.0C322.4 441.4 323.5 440.7 325.0 440.0C326.5 439.3 329.5 439.0 330.4 438.8Z" fill="#5f2c03" stroke="#ffff00" stroke-width="1.35" stroke-linejoin="round"/>
<text x="227" y="1005" font-family="Liberation Sans, sans-serif" font-size="13" fill="#d8d8da">Clippen-Zustand:A</text>
</svg>
<div style="position:absolute;left:4px;top:1042px;width:1762px;height:33.5px;background:#eeeff0;border-top:2px solid #a2a3a5;box-sizing:border-box"></div>
<div style="position:absolute;left:10px;top:1050px;width:22px;height:22px;box-sizing:border-box;border:1px solid #b9babd;border-top-color:#9c9da0;background:linear-gradient(#f5f5f6,#e3e4e6)"></div>
<div style="position:absolute;left:36px;top:1050px;width:22px;height:22px;box-sizing:border-box;border:1px solid #b9babd;border-top-color:#9c9da0;background:linear-gradient(#f5f5f6,#e3e4e6)"></div>
<svg class="ab" style="left:14.0px;top:1052.0px" width="16" height="18"><g fill="#fff" stroke="#1a2a9a" stroke-width="1.1"><rect x="2.5" y="1" width="3.5" height="3.5"/><rect x="2.5" y="7" width="3.5" height="3.5"/><rect x="2.5" y="13" width="3.5" height="3.5"/><rect x="9.5" y="7" width="3.5" height="3.5"/></g><path d="M4.2 4.5V13M6 8.8H9.5" stroke="#222" stroke-width="1"/></svg>
<svg class="ab" style="left:38.0px;top:1052.0px" width="18" height="18"><circle cx="9" cy="9" r="7" fill="#3a9ad8" stroke="#1a5a9a" stroke-width=".8"/><path d="M5 5C8 3 11 5 10 8C9 10 6 10 5.5 13C8 15 12 14 13.5 11C12 9 13 6 11 4Z" fill="#4ac84a"/><ellipse cx="9" cy="9" rx="9" ry="3.6" transform="rotate(-38 9 9)" fill="none" stroke="#f0a818" stroke-width="1.6"/></svg>
<div style="position:absolute;left:67px;top:1047px;width:1px;height:25px;background:#d0d1d5"></div>
<div style="position:absolute;left:75px;top:1055.5px;width:5px;height:5px;background:#1414e0;border-radius:50%"></div>
<div class="t" style="left:85.0px;top:1050.9px;font-size:11.8px;line-height:15px;color:#3a3a44;font-weight:bold;">KE erfolgreich umdefiniert.</div>
<div style="position:absolute;left:1077px;top:1047px;width:1px;height:25px;background:#d0d1d5"></div>
<svg class="ab" style="left:1083.0px;top:1051.0px" width="18" height="18"><rect x="1" y="1" width="14" height="14" fill="#fff" stroke="#1a2a9a" stroke-width="1.4"/><circle cx="7.5" cy="7.5" r="4.6" fill="#fff" stroke="#333" stroke-width="1.2"/><path d="M11 11L16.5 16.5" stroke="#9a4a1a" stroke-width="2"/></svg>
<svg class="ab" style="left:1107.0px;top:1051.0px" width="18" height="18"><circle cx="7" cy="7" r="5.3" fill="#fff" stroke="#444" stroke-width="1.2"/><path d="M4 7H10M7 4V10" stroke="#111" stroke-width="1.7"/><path d="M11 11L16.5 16.5" stroke="#9a4a1a" stroke-width="2"/></svg>
<svg class="ab" style="left:1131.0px;top:1051.0px" width="18" height="18"><circle cx="7" cy="7" r="5.3" fill="#fff" stroke="#444" stroke-width="1.2"/><path d="M4 7H10" stroke="#111" stroke-width="1.7"/><path d="M11 11L16.5 16.5" stroke="#9a4a1a" stroke-width="2"/></svg>
<svg class="ab" style="left:1156.0px;top:1051.0px" width="16" height="17"><defs><linearGradient id="grp" x1="0" y1="0" x2="1" y2="1"><stop offset="0" stop-color="#fff"/><stop offset=".55" stop-color="#e8eefa"/><stop offset="1" stop-color="#2a50a8"/></linearGradient></defs><rect x="1" y="1" width="13.5" height="15" fill="url(#grp)" stroke="#1a3a9a" stroke-width="1.3"/><path d="M13 4C9 6 7 10 6 15" fill="none" stroke="#1a2a6a" stroke-width="1.4"/></svg>
<svg class="ab" style="left:1180.0px;top:1051.0px" width="18" height="17"><path d="M1.5 5L5 1.5H16.5V11.5L13 15.5H1.5Z" fill="#fdfdfd" stroke="#777" stroke-width="1"/><path d="M1.5 5L5 1.5H16.5L13 5Z" fill="#7eeaea"/><path d="M13 5L16.5 1.5V11.5L13 15.5Z" fill="#b9b9bd"/></svg>
<svg class="ab" style="left:1217.0px;top:1051.0px" width="20" height="17"><path d="M1.5 7L4.5 4H12V12L9 15H1.5Z" fill="#fdfdfd" stroke="#666" stroke-width="1"/><path d="M9 15L12 12V9L9 12Z" fill="#0a9a9a"/><text x="8.5" y="8" font-family="Liberation Sans, sans-serif" font-size="8.5" font-weight="bold" fill="#111">AB</text></svg>
<svg class="ab" style="left:1255.0px;top:1051.0px" width="19" height="18"><path d="M1 1H12V15H1Z" fill="#fafafa" stroke="#777" stroke-width="1"/><path d="M3 4H10M3 6.5H10" stroke="#aaa" stroke-width=".8"/><rect x="4.5" y="7.5" width="13" height="9" rx="1" fill="#555" stroke="#222" stroke-width=".8"/><rect x="8" y="5.8" width="5" height="2" fill="#444"/><circle cx="11" cy="12" r="3" fill="#e8e8e8" stroke="#222" stroke-width=".8"/></svg>
<svg class="ab" style="left:1279.0px;top:1051.0px" width="19" height="18"><g stroke="#9a3a10" stroke-width="1.3"><path d="M1 1L5 5M5 1L1 5M8 8L16 17M16 8L8 17"/><path d="M12 0L3 17" stroke-dasharray="3 1.5"/></g><path d="M7 12.5H17" stroke="#9a3a10" stroke-width="1.2"/></svg>
<svg class="ab" style="left:1317.0px;top:1051.0px" width="18" height="19"><rect x="1" y="1" width="7" height="3.5" fill="#e8e040" stroke="#7a7a2a" stroke-width=".8"/><path d="M9.5 3H15L10 10.5H15.5" fill="none" stroke="#222" stroke-width="1"/><ellipse cx="11" cy="14.5" rx="4.5" ry="3" fill="#8aa8c8" stroke="#444" stroke-width=".8"/><circle cx="11" cy="14.5" r="1.5" fill="#333"/><path d="M6 17.5H16" stroke="#666" stroke-width=".8"/></svg>
<svg class="ab" style="left:1341.0px;top:1051.0px" width="18" height="18"><path d="M3.5 3L8 9L3.5 15.5M8 9H15" fill="none" stroke="#222" stroke-width="1.3"/><circle cx="3.5" cy="3" r="2.5" fill="#2ac82a" stroke="#1a6a1a" stroke-width=".6"/><circle cx="3.5" cy="15" r="2.5" fill="#3ad8e8" stroke="#1a6a8a" stroke-width=".6"/><circle cx="15" cy="9" r="2.5" fill="#e81818" stroke="#8a1a1a" stroke-width=".6"/></svg>
<div style="position:absolute;left:1203.5px;top:1057.0px;width:0;height:0;border-left:3.5px solid transparent;border-right:3.5px solid transparent;border-top:4.0px solid #333"></div>
<div style="position:absolute;left:1241.5px;top:1057.0px;width:0;height:0;border-left:3.5px solid transparent;border-right:3.5px solid transparent;border-top:4.0px solid #333"></div>
<div style="position:absolute;left:1303.0px;top:1057.0px;width:0;height:0;border-left:3.5px solid transparent;border-right:3.5px solid transparent;border-top:4.0px solid #333"></div>
<div style="position:absolute;left:1394px;top:1047px;width:1px;height:25px;background:#d0d1d5"></div>
<div style="position:absolute;left:1398.5px;top:1055px;width:10px;height:10px;background:#4fd34a;border-radius:50%"></div>
<div style="position:absolute;left:1410.5px;top:1057px;width:6px;height:6px;background:#d2d2d5;border-radius:50%"></div>
<div style="position:absolute;left:1417.5px;top:1057px;width:6px;height:6px;background:#d2d2d5;border-radius:50%"></div>
<div style="position:absolute;left:1426px;top:1047px;width:1px;height:25px;background:#d0d1d5"></div>
<div style="position:absolute;left:1431px;top:1048px;width:39px;height:23px;box-sizing:border-box;border:1px solid #c2c3c7;background:#f6f6f8;border-radius:2px"></div>
<svg class="ab" style="left:1441.0px;top:1052.0px" width="20" height="16"><path d="M2 6L4.5 1.5H8V14.5H1.5Z M18 6L15.5 1.5H12V14.5H18.5Z" fill="#222"/><rect x="8" y="4" width="4" height="5" fill="#222"/><path d="M3.5 7V13M16.5 7V13" stroke="#c8a868" stroke-width="1.2"/></svg>
<div style="position:absolute;left:1570px;top:1048px;width:178px;height:23.5px;box-sizing:border-box;border:1px solid #c2c3c7;border-top-color:#aeafb2;background:#fbfbfc"></div>
<div style="position:absolute;left:1472px;top:1047px;width:1px;height:25px;background:#d0d1d5"></div>
<div style="position:absolute;left:1733px;top:1049px;width:1px;height:21.5px;background:#d0d1d5"></div>
<div class="t" style="left:1576.0px;top:1050.5px;font-size:13px;line-height:17px;color:#44444c;">Smart</div>
<div style="position:absolute;left:1736.0px;top:1057.0px;width:0;height:0;border-left:4.0px solid transparent;border-right:4.0px solid transparent;border-top:5.0px solid #333"></div>
</body></html>
